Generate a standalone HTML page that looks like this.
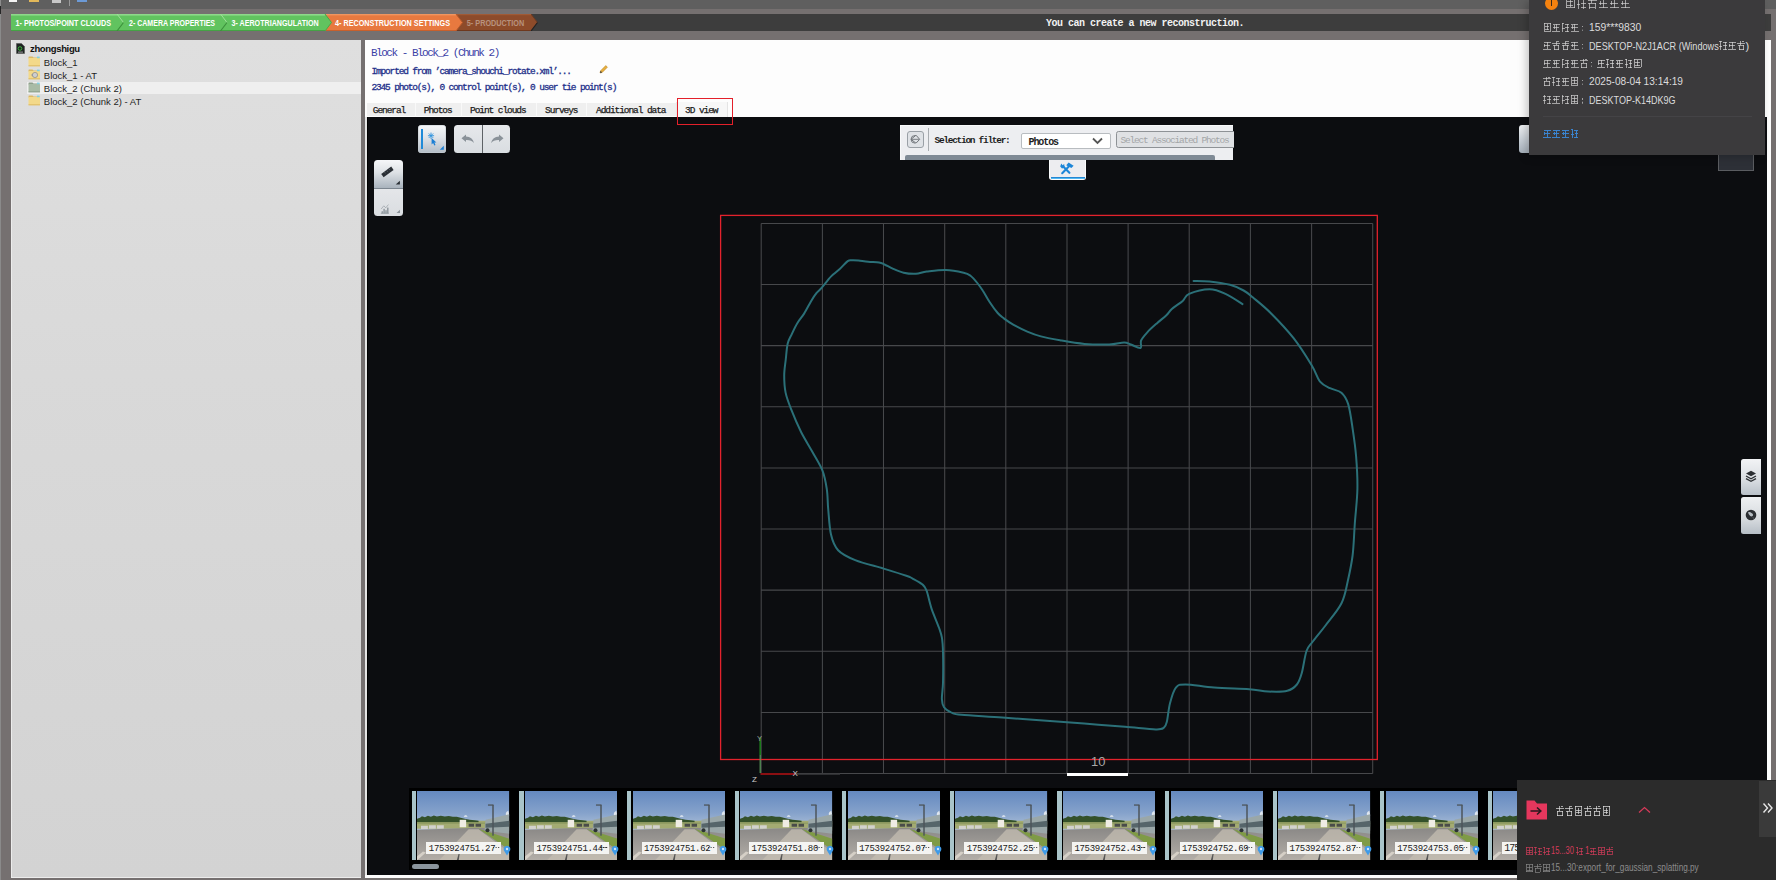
<!DOCTYPE html><html><head><meta charset="utf-8"><title>ContextCapture</title><style>
*{box-sizing:border-box}
html,body{margin:0;padding:0}
body{width:1776px;height:880px;overflow:hidden;position:relative;background:#757070;font-family:"Liberation Sans",sans-serif}
.a{position:absolute}
.mono{font-family:"Liberation Mono",monospace;white-space:pre}
.cj{display:inline-block;color:transparent;overflow:hidden;white-space:nowrap;vertical-align:-1px}
</style></head><body>
<div class="a" style="left:0;top:0;width:1776px;height:9px;background:#5f5f5f"></div>
<div class="a" style="left:0;top:0;width:1px;height:6px;background:#8c8c8c"></div>
<div class="a" style="left:0;top:6px;width:1px;height:8px;background:#262626"></div>
<div class="a" style="left:9px;top:0;width:8px;height:2px;background:#f4f4f4"></div>
<div class="a" style="left:29px;top:0;width:10px;height:1.5px;background:#e2b85a"></div>
<div class="a" style="left:52px;top:0;width:9px;height:2.5px;background:#c8c8c8"></div>
<div class="a" style="left:68.5px;top:0;width:1.5px;height:6px;background:#9a9a9a"></div>
<div class="a" style="left:77px;top:0;width:10px;height:2px;background:#6c9ad6"></div>
<svg class="a" style="left:0;top:14px" width="1776" height="17" viewBox="0 14 1776 17">
<rect x="11" y="14" width="1760" height="17" fill="#3d3d3d"/>
<polygon points="450,14 531,14 537.5,22.5 531,31 450,31" fill="#8d4b2a"/>
<polyline points="531,14 537.5,22.5" stroke="#6a3a22" stroke-width="1" fill="none"/>
<polyline points="537.5,22.5 531,31" stroke="#222" stroke-width="1.2" fill="none"/>
<rect x="450" y="14" width="81" height="1.2" fill="#a05a35"/>
<rect x="450" y="30" width="81" height="1" fill="#6e381e"/>
<polygon points="300,14 456,14 462.5,22.5 456,31 300,31" fill="#e8793f"/>
<rect x="300" y="14" width="156" height="1.4" fill="#f0955f"/>
<rect x="300" y="30" width="156" height="1" fill="#c9602c"/>
<polyline points="456,14 462.5,22.5 456,31" stroke="#b65a2c" stroke-width="1" fill="none"/>
<polygon points="11,14 325,14 331.5,22.5 325,31 11,31" fill="#61c35f"/>
<rect x="11" y="14" width="314" height="1.6" fill="#8ed88a"/>
<rect x="11" y="30" width="314" height="1" fill="#45a245"/>
<polyline points="325,14 331.5,22.5 325,31" stroke="#4aa84a" stroke-width="1" fill="none"/>
<line x1="117" y1="14" x2="123.5" y2="22.5" stroke="#9fe09a" stroke-width="1"/>
<line x1="123.5" y1="22.5" x2="117" y2="31" stroke="#3b8f3b" stroke-width="1.1"/>
<line x1="220.5" y1="14" x2="227.0" y2="22.5" stroke="#9fe09a" stroke-width="1"/>
<line x1="227.0" y1="22.5" x2="220.5" y2="31" stroke="#3b8f3b" stroke-width="1.1"/>
</svg>
<svg class="a" style="left:0;top:14px" width="560" height="17" viewBox="0 14 560 17" font-family="Liberation Sans" font-weight="bold" font-size="8.2">
<text x="15.5" y="25.9" textLength="95.5" lengthAdjust="spacingAndGlyphs" fill="#fff">1- PHOTOS/POINT CLOUDS</text>
<text x="129" y="25.9" textLength="86" lengthAdjust="spacingAndGlyphs" fill="#fff">2- CAMERA PROPERTIES</text>
<text x="231.5" y="25.9" textLength="87.2" lengthAdjust="spacingAndGlyphs" fill="#fff">3- AEROTRIANGULATION</text>
<text x="335" y="25.9" textLength="115" lengthAdjust="spacingAndGlyphs" fill="#fff">4- RECONSTRUCTION SETTINGS</text>
<text x="466.8" y="25.9" textLength="57.4" lengthAdjust="spacingAndGlyphs" fill="#b8927e">5- PRODUCTION</text>
</svg>
<div class="a mono" style="left:1046px;top:18.3px;color:#f2f2f2;font-size:10px;font-weight:bold;letter-spacing:-0.5px;line-height:11px">You can create a new reconstruction.</div>
<div class="a" style="left:0;top:14px;width:1px;height:866px;background:#8a8a8a"></div>
<div class="a" style="left:11px;top:40px;width:350px;height:837.5px;background:linear-gradient(#dfdfdf,#d9d9d9 40%,#d3d3d3);border-left:1px solid #ececec;border-bottom:1px solid #ececec"></div>
<div class="a" style="left:26.5px;top:81.5px;width:334px;height:12.8px;background:#efefef"></div>
<svg class="a" style="left:16px;top:42.5px" width="9" height="11" viewBox="0 0 9 11"><path d="M0.5 0.5 L5.5 0.5 L8.5 3.5 L8.5 10.5 L0.5 10.5 Z" fill="#1e2422" stroke="#555" stroke-width="0.6"/><circle cx="4" cy="5.5" r="1.8" fill="none" stroke="#3ec040" stroke-width="0.9"/><rect x="2" y="8.6" width="5" height="1" fill="#9a9a9a"/></svg>
<div class="a" style="left:30px;top:42.5px;font-size:9.5px;font-weight:bold;color:#101010;line-height:11px;white-space:nowrap;letter-spacing:-0.35px">zhongshigu</div>
<svg class="a" style="left:28.3px;top:55.7px" width="13" height="11" viewBox="0 0 13 11"><path d="M0.5 2.5 L0.5 1.2 Q0.5 0.5 1.2 0.5 L4.5 0.5 L5.5 1.5 L11.5 1.5 L11.5 2.5 Z" fill="#dcb964"/><rect x="0.5" y="2" width="11.5" height="8.3" rx="0.6" fill="#f3d98a"/><rect x="0.5" y="9.3" width="11.5" height="1" fill="#dcb964"/><rect x="9" y="0.6" width="2.6" height="1.6" fill="#7fd0e0"/></svg>
<div class="a" style="left:43.8px;top:56.6px;font-size:9.5px;color:#1e1e1e;line-height:11px;white-space:nowrap">Block_1</div>
<svg class="a" style="left:28.3px;top:68.8px" width="13" height="11" viewBox="0 0 13 11"><path d="M0.5 2.5 L0.5 1.2 Q0.5 0.5 1.2 0.5 L4.5 0.5 L5.5 1.5 L11.5 1.5 L11.5 2.5 Z" fill="#dcb964"/><rect x="0.5" y="2" width="11.5" height="8.3" rx="0.6" fill="#f3d98a"/><rect x="0.5" y="9.3" width="11.5" height="1" fill="#dcb964"/><rect x="9" y="0.6" width="2.6" height="1.6" fill="#7fd0e0"/></svg>
<div class="a" style="left:43.8px;top:69.7px;font-size:9.5px;color:#1e1e1e;line-height:11px;white-space:nowrap">Block_1 - AT</div>
<svg class="a" style="left:28.3px;top:81.9px" width="13" height="11" viewBox="0 0 13 11"><path d="M0.5 2.5 L0.5 1.2 Q0.5 0.5 1.2 0.5 L4.5 0.5 L5.5 1.5 L11.5 1.5 L11.5 2.5 Z" fill="#8fa08c"/><rect x="0.5" y="2" width="11.5" height="8.3" rx="0.6" fill="#a9bba6"/><rect x="0.5" y="9.3" width="11.5" height="1" fill="#8fa08c"/><rect x="9" y="0.6" width="2.6" height="1.6" fill="#7fd0e0"/></svg>
<div class="a" style="left:43.8px;top:82.8px;font-size:9.5px;color:#1e1e1e;line-height:11px;white-space:nowrap">Block_2 (Chunk 2)</div>
<svg class="a" style="left:28.3px;top:95.0px" width="13" height="11" viewBox="0 0 13 11"><path d="M0.5 2.5 L0.5 1.2 Q0.5 0.5 1.2 0.5 L4.5 0.5 L5.5 1.5 L11.5 1.5 L11.5 2.5 Z" fill="#dcb964"/><rect x="0.5" y="2" width="11.5" height="8.3" rx="0.6" fill="#f3d98a"/><rect x="0.5" y="9.3" width="11.5" height="1" fill="#dcb964"/><rect x="9" y="0.6" width="2.6" height="1.6" fill="#7fd0e0"/></svg>
<div class="a" style="left:43.8px;top:95.9px;font-size:9.5px;color:#1e1e1e;line-height:11px;white-space:nowrap">Block_2 (Chunk 2) - AT</div>
<svg class="a" style="left:30px;top:71px" width="10" height="8" viewBox="0 0 10 8"><circle cx="5" cy="4" r="2.6" fill="#cfcfcf" stroke="#8a8a8a" stroke-width="0.7"/><path d="M1 4 L3 2.5 L3 5.5Z" fill="#999"/></svg>
<div class="a" style="left:364.6px;top:40px;width:1406.4px;height:838px;background:#fdfdfd"></div>
<div class="a" style="left:364.6px;top:117px;width:2px;height:758px;background:#e4e4e4"></div>
<div class="a mono" style="left:371px;top:46.5px;font-size:11px;color:#3b3fa6;letter-spacing:-1.49px;line-height:12px">Block - Block_2 (Chunk 2)</div>
<div class="a mono" style="left:371.5px;top:65.5px;font-size:9.5px;color:#23308a;letter-spacing:-1.17px;line-height:11px;-webkit-text-stroke:0.3px #23308a">Imported from ’camera_shouchi_rotate.xml’...</div>
<svg class="a" style="left:598px;top:64px" width="11" height="11" viewBox="0 0 11 11"><path d="M2 9 L2.6 6.8 L7.8 1.6 L9.4 3.2 L4.2 8.4 Z" fill="#e8b040" stroke="#b88420" stroke-width="0.6"/><path d="M2 9 L2.6 6.8 L4.2 8.4Z" fill="#444"/></svg>
<div class="a mono" style="left:371.5px;top:81.5px;font-size:9.5px;color:#23308a;letter-spacing:-1.17px;line-height:11px;-webkit-text-stroke:0.3px #23308a">2345 photo(s), 0 control point(s), 0 user tie point(s)</div>
<div class="a" style="left:367px;top:103px;width:309px;height:13px;background:#efefef"></div>
<div class="a" style="left:415.2px;top:103px;width:1px;height:14px;background:#f9f9f9"></div>
<div class="a" style="left:460.8px;top:103px;width:1px;height:14px;background:#f9f9f9"></div>
<div class="a" style="left:536px;top:103px;width:1px;height:14px;background:#f9f9f9"></div>
<div class="a" style="left:586.4px;top:103px;width:1px;height:14px;background:#f9f9f9"></div>
<div class="a" style="left:676px;top:102px;width:52px;height:15px;background:#f7f7f7;border-left:1px solid #e8e8e8;border-right:1px solid #e4e4e4"></div>
<div class="a mono" style="left:372.8px;top:105.2px;font-size:9.5px;color:#1c1c1c;letter-spacing:-1.07px;line-height:11px;-webkit-text-stroke:0.25px #1c1c1c">General</div>
<div class="a mono" style="left:423.8px;top:105.2px;font-size:9.5px;color:#1c1c1c;letter-spacing:-1.07px;line-height:11px;-webkit-text-stroke:0.25px #1c1c1c">Photos</div>
<div class="a mono" style="left:470px;top:105.2px;font-size:9.5px;color:#1c1c1c;letter-spacing:-1.07px;line-height:11px;-webkit-text-stroke:0.25px #1c1c1c">Point clouds</div>
<div class="a mono" style="left:545px;top:105.2px;font-size:9.5px;color:#1c1c1c;letter-spacing:-1.07px;line-height:11px;-webkit-text-stroke:0.25px #1c1c1c">Surveys</div>
<div class="a mono" style="left:596px;top:105.2px;font-size:9.5px;color:#1c1c1c;letter-spacing:-1.07px;line-height:11px;-webkit-text-stroke:0.25px #1c1c1c">Additional data</div>
<div class="a mono" style="left:685px;top:104.6px;font-size:9.5px;color:#1c1c1c;letter-spacing:-1.07px;line-height:11px;-webkit-text-stroke:0.25px #1c1c1c">3D view</div>
<div class="a" style="left:366.6px;top:117px;width:1400.4px;height:758px;background:#0c0d10"></div>
<div class="a" style="left:366.6px;top:117px;width:1px;height:758px;background:#000"></div>
<svg class="a" style="left:0;top:0" width="1776" height="880" viewBox="0 0 1776 880">
<path d="M761.2 223.4V773.5 M822.4 223.4V773.5 M883.5 223.4V773.5 M944.7 223.4V773.5 M1005.8 223.4V773.5 M1067.0 223.4V773.5 M1128.1 223.4V773.5 M1189.2 223.4V773.5 M1250.4 223.4V773.5 M1311.6 223.4V773.5 M1372.7 223.4V773.5 M761.2 223.4H1372.7 M761.2 284.5H1372.7 M761.2 345.6H1372.7 M761.2 406.8H1372.7 M761.2 467.9H1372.7 M761.2 529.0H1372.7 M761.2 590.1H1372.7 M761.2 651.3H1372.7 M761.2 712.4H1372.7 M761.2 773.5H1372.7" stroke="#47484b" stroke-width="1.05" fill="none"/>
<path d="M1193.6 280.9 C1196.2 281.0 1203.4 280.8 1209.5 281.4 C1215.6 282.0 1224.3 283.3 1230.0 284.8 C1235.7 286.3 1239.8 288.4 1243.6 290.5 C1247.4 292.6 1248.2 293.5 1252.7 297.3 C1257.2 301.1 1264.1 306.4 1270.9 313.2 C1277.7 320.0 1286.8 329.5 1293.6 338.2 C1300.4 346.9 1307.4 358.3 1311.8 365.5 C1316.2 372.7 1316.8 377.6 1319.8 381.4 C1322.8 385.2 1326.4 386.3 1330.0 388.2 C1333.6 390.1 1338.4 390.0 1341.4 392.7 C1344.4 395.4 1346.3 398.0 1348.2 404.1 C1350.1 410.2 1351.4 420.4 1352.7 429.1 C1354.0 437.8 1355.3 446.5 1356.1 456.4 C1356.9 466.3 1357.6 477.5 1357.4 488.7 C1357.2 499.9 1355.6 512.6 1354.8 523.7 C1354.0 534.8 1353.8 546.0 1352.6 555.5 C1351.4 565.0 1349.6 573.0 1347.8 581.0 C1346.0 589.0 1345.2 595.9 1341.5 603.3 C1337.8 610.7 1330.3 619.1 1325.5 625.5 C1320.7 631.9 1316.0 637.2 1312.8 641.5 C1309.6 645.8 1308.3 645.7 1306.5 651.0 C1304.7 656.3 1303.3 667.7 1301.7 673.3 C1300.1 678.9 1299.3 681.6 1296.9 684.5 C1294.5 687.4 1292.1 689.6 1287.3 690.8 C1282.5 692.0 1274.6 691.8 1268.2 691.5 C1261.8 691.2 1258.1 689.9 1249.1 689.2 C1240.1 688.6 1224.7 688.4 1214.1 687.6 C1203.5 686.8 1191.9 684.4 1185.5 684.4 C1179.1 684.4 1178.5 684.5 1175.9 687.6 C1173.3 690.7 1171.5 697.5 1170.0 703.2 C1168.5 708.9 1167.9 717.5 1166.9 721.6 C1165.9 725.7 1165.8 726.4 1163.9 727.7 C1162.0 729.0 1162.2 729.6 1155.7 729.4 C1149.2 729.2 1136.9 727.7 1125.0 726.7 C1113.1 725.7 1097.7 724.6 1084.1 723.6 C1070.5 722.6 1056.8 721.6 1043.2 720.6 C1029.6 719.6 1015.9 718.5 1002.3 717.5 C988.7 716.5 969.9 715.6 961.4 714.8 C952.9 713.9 954.0 713.6 951.1 712.4 C948.2 711.1 945.5 709.5 944.0 707.3 C942.5 705.1 942.1 703.2 941.9 699.1 C941.7 695.0 942.8 690.6 943.0 682.7 C943.2 674.9 943.2 659.5 943.0 652.0 C942.8 644.5 942.6 641.8 941.9 637.7 C941.2 633.6 940.6 632.3 938.9 627.5 C937.2 622.7 933.8 615.2 931.7 609.1 C929.7 603.0 928.1 594.8 926.6 590.7 C925.1 586.6 924.9 586.5 922.5 584.5 C920.1 582.5 915.0 579.9 912.3 578.4 C909.6 576.9 911.1 577.3 906.3 575.7 C901.5 574.1 892.1 571.2 883.6 568.6 C875.1 566.0 862.8 563.2 855.2 560.1 C847.6 557.0 842.1 554.5 838.1 550.2 C834.1 546.0 832.6 541.5 831.0 534.6 C829.4 527.7 828.9 516.6 828.2 509.0 C827.5 501.4 827.8 495.5 826.8 489.1 C825.8 482.7 824.9 476.9 822.5 470.7 C820.1 464.5 816.1 458.6 812.6 452.2 C809.1 445.8 804.8 439.4 801.2 432.3 C797.7 425.2 793.9 416.2 791.3 409.6 C788.7 403.0 786.8 398.3 785.6 392.6 C784.4 386.9 784.2 381.0 784.2 375.6 C784.2 370.2 785.1 365.3 785.7 360.0 C786.3 354.7 786.7 347.9 787.7 343.6 C788.7 339.3 790.2 337.5 791.8 334.1 C793.4 330.7 795.2 326.6 797.3 323.2 C799.3 319.8 801.8 317.2 804.1 313.6 C806.4 310.0 808.9 304.8 810.9 301.4 C812.9 298.0 814.6 295.5 816.4 293.2 C818.2 290.9 820.0 289.8 821.8 287.7 C823.6 285.6 825.7 282.8 827.3 280.9 C828.9 279.0 829.4 278.0 831.4 276.1 C833.4 274.2 836.8 271.8 839.5 269.3 C842.2 266.8 845.7 262.6 847.7 261.1 C849.8 259.6 850.0 260.3 851.8 260.2 C853.6 260.1 855.9 260.2 858.6 260.5 C861.3 260.8 864.8 261.5 868.2 261.8 C871.6 262.1 876.4 262.1 879.1 262.5 C881.8 262.9 882.2 263.5 884.5 264.5 C886.8 265.5 889.5 267.2 892.7 268.6 C895.9 270.0 899.7 271.8 903.6 272.7 C907.5 273.6 912.0 274.0 915.9 273.8 C919.8 273.6 921.8 272.2 926.8 271.6 C931.8 271.0 939.8 269.8 945.9 270.0 C952.0 270.2 959.5 271.8 963.6 272.7 C967.7 273.6 968.2 274.0 970.5 275.7 C972.8 277.4 975.3 280.5 977.3 283.0 C979.3 285.5 980.7 287.3 982.7 290.5 C984.8 293.7 987.1 298.2 989.6 302.0 C992.1 305.8 995.3 310.2 997.7 313.0 C1000.1 315.8 1001.5 316.6 1004.1 318.6 C1006.8 320.6 1009.7 322.6 1013.6 324.8 C1017.5 327.0 1022.8 329.7 1027.3 331.6 C1031.8 333.5 1035.2 334.9 1040.9 336.4 C1046.6 337.9 1054.1 339.2 1061.4 340.5 C1068.7 341.8 1076.5 343.2 1084.5 343.9 C1092.5 344.6 1102.5 344.7 1109.1 344.5 C1115.7 344.3 1120.5 342.5 1124.1 342.5 C1127.7 342.5 1128.2 343.6 1130.9 344.5 C1133.6 345.4 1138.8 348.7 1140.5 348.0 C1142.2 347.3 1140.0 343.1 1141.1 340.5 C1142.2 337.9 1144.7 335.2 1147.3 332.3 C1149.9 329.4 1153.6 326.2 1156.8 323.4 C1160.0 320.5 1163.9 317.6 1166.4 315.2 C1168.9 312.8 1169.1 311.5 1171.8 309.1 C1174.5 306.7 1179.8 303.4 1182.7 300.9 C1185.6 298.4 1184.6 295.8 1189.1 293.9 C1193.6 292.0 1203.4 289.3 1209.5 289.3 C1215.6 289.3 1220.0 291.4 1225.5 293.9 C1231.0 296.4 1239.7 302.4 1242.5 304.1" stroke="#2b7078" stroke-width="2" fill="none" stroke-linejoin="round" stroke-linecap="round"/>
<rect x="720.6" y="215.4" width="656.7" height="544.1" fill="none" stroke="#e3222c" stroke-width="1.3"/>
<line x1="760.2" y1="737" x2="760.2" y2="755" stroke="#1c7a1c" stroke-width="1.6"/>
<line x1="760.2" y1="755" x2="760.2" y2="773" stroke="#5a9a5a" stroke-width="1.2"/>
<line x1="760.5" y1="774" x2="795" y2="774" stroke="#8b0f12" stroke-width="2"/>
<line x1="795" y1="774" x2="840" y2="774" stroke="#3a3b3e" stroke-width="1.4"/>
<rect x="1067" y="773" width="61" height="3" fill="#ffffff"/>
</svg>
<div class="a" style="left:757px;top:733.5px;font-size:7.5px;color:#9a9a9a;line-height:9px">Y</div>
<div class="a" style="left:792.5px;top:769px;font-size:8px;color:#cfcfcf;line-height:9px">X</div>
<div class="a" style="left:752px;top:774.5px;font-size:8px;color:#cfcfcf;line-height:9px">Z</div>
<div class="a" style="left:1091px;top:755px;font-size:13px;color:#a6a6a6;line-height:14px">10</div>
<div class="a" style="left:677px;top:98px;width:56px;height:27px;border:1.4px solid #e3202a"></div>
<div class="a" style="left:418px;top:124.6px;width:28px;height:28.2px;border-radius:3.5px;background:linear-gradient(#f6f7f9,#dfe3e8 45%,#b3bcc6);box-shadow:inset 0 0 0 0.6px #c8ced4"></div>
<div class="a" style="left:421.4px;top:128.5px;width:1.9px;height:20.5px;background:#1f8ad8"></div>
<svg class="a" style="left:426px;top:130px" width="18" height="20" viewBox="0 0 18 20"><g stroke="#2f93de" stroke-width="0.9" stroke-linecap="round"><line x1="5" y1="3" x2="5" y2="8.4"/><line x1="2.3" y1="5.7" x2="7.7" y2="5.7"/><line x1="3.1" y1="3.8" x2="6.9" y2="7.6"/><line x1="6.9" y1="3.8" x2="3.1" y2="7.6"/></g><path d="M5.6 8 L5.6 14.6 L7.1 13.1 L8.3 15.6 L9.5 15.1 L8.4 12.6 L10.4 12.4 Z" fill="#1c7fd4"/><path d="M13.8 19.7 L17.8 15.8 L17.8 19.7 Z" fill="#1c7fd4"/></svg>
<div class="a" style="left:453.7px;top:124.6px;width:56.6px;height:28.2px;border-radius:3.5px;background:linear-gradient(#e6e8eb,#d9dde1)"></div>
<div class="a" style="left:482px;top:124.6px;width:1px;height:28.2px;background:#5e6266"></div>
<svg class="a" style="left:461px;top:134px" width="14" height="10" viewBox="0 0 14 10"><path d="M0.5 4.2 L5 0.5 L5 2.6 Q11.5 2.8 13 9 Q10.5 5.8 5 6 L5 8 Z" fill="#8a9299"/></svg>
<svg class="a" style="left:490px;top:134px" width="14" height="10" viewBox="0 0 14 10"><path d="M13.5 4.2 L9 0.5 L9 2.6 Q2.5 2.8 1 9 Q3.5 5.8 9 6 L9 8 Z" fill="#8a9299"/></svg>
<div class="a" style="left:374px;top:159.5px;width:28.5px;height:28px;border-radius:3.5px 3.5px 0 0;background:linear-gradient(#f6f7f9,#dde1e5 45%,#a9b3bd)"></div>
<div class="a" style="left:374px;top:187.5px;width:28.5px;height:28.5px;border-radius:0 0 3.5px 3.5px;background:linear-gradient(#e4e6e9,#dadde1);border-top:1px solid #7c8690"></div>
<svg class="a" style="left:380px;top:165px" width="22" height="22" viewBox="0 0 22 22"><path d="M1.2 9 L11.2 1.6 L13.6 4.9 L3.6 12.3 Z" fill="#2a2f35"/><g stroke="#8a949c" stroke-width="0.5"><line x1="4.6" y1="7.2" x2="5.4" y2="8.3"/><line x1="6.8" y1="5.6" x2="7.6" y2="6.7"/><line x1="9" y1="4" x2="9.8" y2="5.1"/></g><path d="M15.7 19.5 L19.9 15.8 L19.9 19.5 Z" fill="#2a2f35"/></svg>
<svg class="a" style="left:380px;top:195px" width="22" height="22" viewBox="0 0 22 22"><g fill="#8c949b"><rect x="1.6" y="16.2" width="1.3" height="2.2"/><rect x="3.4" y="13.8" width="1.4" height="4.6"/><rect x="5.3" y="15.2" width="1.4" height="3.2"/><rect x="7.1" y="12.6" width="1.4" height="5.8"/><rect x="0.8" y="17.8" width="8" height="0.8"/></g><path d="M1.2 14 L3.8 10.8 L5.8 12.8 L8.4 9.6" stroke="#8c949b" stroke-width="0.6" fill="none"/><path d="M16.5 18 L20 14.8 L20 18Z" fill="#8c949b"/></svg>
<div class="a" style="left:900.3px;top:124.8px;width:333.2px;height:35px;background:#edeef1;border:1px solid #f8f9fa;border-right:none;border-bottom:none"></div>
<div class="a" style="left:905px;top:155px;width:310.3px;height:4.8px;border-radius:2px 2px 0 0;background:#7f8a95"></div>
<div class="a" style="left:907.2px;top:131px;width:16.6px;height:16.7px;border-radius:3px;background:#dfe2e6;border:1px solid #9aa0a6"></div>
<svg class="a" style="left:909px;top:133px" width="13" height="13" viewBox="0 0 13 13"><path d="M2 6.3 L7 2.2 L10.7 6.3 L7 10.2 Z" fill="none" stroke="#6e7378" stroke-width="1"/><path d="M2 6.3 Q2 2.5 6 2.5 M2 6.3 Q2 10 6 10.2 M2.6 6.3 H10" stroke="#6e7378" stroke-width="0.9" fill="none"/></svg>
<div class="a" style="left:928.4px;top:128px;width:1px;height:23px;background:#a8acb0"></div>
<div class="a mono" style="left:934.5px;top:135px;font-size:9.5px;font-weight:bold;color:#1e1e1e;letter-spacing:-1.29px;line-height:11px">Selection filter:</div>
<div class="a" style="left:1021.4px;top:132.7px;width:89.4px;height:16.4px;border-radius:2px;background:#fff;border:1px solid #b8bcc0"></div>
<div class="a mono" style="left:1028.5px;top:136.6px;font-size:10px;font-weight:bold;color:#1e1e1e;letter-spacing:-1.08px;line-height:11px">Photos</div>
<svg class="a" style="left:1092px;top:137px" width="11" height="8" viewBox="0 0 11 8"><path d="M1 1.5 L5.5 6 L10 1.5" stroke="#555" stroke-width="1.8" fill="none"/></svg>
<div class="a" style="left:1116.2px;top:131.4px;width:125px;height:16.2px;border-radius:2.5px;background:#dfe1e4;border:1px solid #8e9296"></div>
<div class="a mono" style="left:1120.5px;top:134.7px;font-size:9.5px;color:#a4a6a8;letter-spacing:-1.2px;line-height:11px">Select Associated Photos</div>
<div class="a" style="left:1233.5px;top:124px;width:30px;height:36px;background:#0c0d10"></div>
<div class="a" style="left:1049.3px;top:159.5px;width:36.3px;height:20px;border-radius:0 0 3px 3px;background:#ededf0;border:1px solid #fafbfc;border-top:none"></div>
<div class="a" style="left:1050.5px;top:176.8px;width:34px;height:2.2px;background:linear-gradient(#1d74c2,#2b9ae6 50%,#7ad6fa)"></div>
<svg class="a" style="left:1058px;top:161px" width="17" height="15" viewBox="0 0 17 15"><g stroke="#1d86d8" stroke-width="2.1" stroke-linecap="round"><line x1="4.2" y1="12.2" x2="10.8" y2="5.6"/><line x1="11.4" y1="11.8" x2="5.2" y2="5.6"/></g><path d="M8.2 4.2 L10.6 1.4 L15.6 4.8 L13.4 7 Z" fill="#1d86d8"/><path d="M2.2 5.6 L3.2 2.6 L4.6 4.2 L6.2 3 L6.6 6.4 L4 7.4 Z" fill="#1d86d8"/></svg>
<div class="a" style="left:1519px;top:124.8px;width:20px;height:28px;border-radius:3px;background:linear-gradient(#f0f2f4,#c4ccd4 60%,#a8b2bc)"></div>
<div class="a" style="left:1718.3px;top:140px;width:35.3px;height:30.6px;background:#2d3037;border:1px solid #5a5c60;border-top:none"></div>
<div class="a" style="left:1741px;top:458.5px;width:20px;height:36px;border-radius:2.5px 0 0 2.5px;background:linear-gradient(#f2f3f5,#d8dce1 60%,#b9c1c9)"></div>
<div class="a" style="left:1741px;top:496.5px;width:20px;height:37.5px;border-radius:2.5px 0 0 2.5px;background:linear-gradient(#eef0f2,#d6dade 60%,#b6bec6)"></div>
<svg class="a" style="left:1745px;top:470px" width="12" height="13" viewBox="0 0 12 13"><path d="M6 0.8 L11 3.5 L6 6.2 L1 3.5Z" fill="#2c2f33"/><path d="M1 6 L6 8.7 L11 6" stroke="#2c2f33" stroke-width="1.3" fill="none"/><path d="M1 8.6 L6 11.3 L11 8.6" stroke="#2c2f33" stroke-width="1.3" fill="none"/></svg>
<svg class="a" style="left:1745px;top:508.5px" width="12" height="12" viewBox="0 0 12 12"><circle cx="6" cy="6" r="5.3" fill="#2c2f33"/><path d="M3 3.2 Q5 2.5 6.5 4 Q8.5 4.5 8 6.5 Q6.8 8 5.2 7 Q3.5 5.8 3 3.2Z M7.5 8 Q8.8 8.4 8.6 10" fill="#b8bec4"/></svg>
<svg width="0" height="0" style="position:absolute"><defs><linearGradient id="sky" x1="0" y1="0" x2="0" y2="1"><stop offset="0" stop-color="#6489c0"/><stop offset="0.55" stop-color="#85a2cb"/><stop offset="1" stop-color="#b2c4da"/></linearGradient><linearGradient id="road" x1="0" y1="0" x2="0" y2="1"><stop offset="0" stop-color="#8a8886"/><stop offset="1" stop-color="#b3aea8"/></linearGradient><symbol id="ph" viewBox="0 0 93 70"><rect width="93" height="40" fill="url(#sky)"/><path d="M92 20 Q88 22 90 25 L93 25Z" fill="#dfe6ee"/><path d="M47 26 Q49 23 51 26Z" fill="#e8eef4"/><rect x="0" y="30" width="93" height="8" fill="#a3ab72"/><path d="M0 31 L0 28 L3 27 L5 25.5 L8 26.5 L11 25 L14 26 L17 24.8 L20 25.8 L24 25 L28 25.8 L32 25.2 L36 26 L40 26 L44 27 L48 28 L53 29 L58 29.5 L62 30 L62 31.5 L0 31.5Z" fill="#34512a"/><path d="M0 31.5 L93 32 L93 33 L0 33Z" fill="#8d9a60"/><rect x="43" y="29" width="6.5" height="7.5" fill="#efece4"/><g fill="#d2d2ce"><rect x="4" y="35" width="7" height="3.5"/><rect x="12" y="34.5" width="7" height="3.5"/><rect x="20" y="34.5" width="7" height="3.5"/></g><g fill="#4a4c4a"><rect x="52" y="33" width="5.5" height="3"/><rect x="59" y="33" width="5.5" height="3"/></g><path d="M0 39 L60 37 L93 38 L93 70 L0 70Z" fill="url(#road)"/><path d="M22 70 L52 38.5 L62 38.5 L93 62 L93 70Z" fill="#c4bdb2" opacity="0.75"/><path d="M62 38 L93 48 L93 57 L88 56 Z" fill="#7f9b46"/><path d="M69 29 L93 23.5 L93 43 L68 40 Z" fill="#9aa7a8"/><path d="M69 33 L93 30 L93 36 L69 37Z" fill="#56656a"/><circle cx="71" cy="39.5" r="2" fill="#2c3234"/><rect x="75.8" y="14" width="1.5" height="31" fill="#4d555b"/><rect x="71.5" y="13.5" width="5.5" height="1.3" fill="#4d555b"/><path d="M0 66 L6 61 L9 62 L0 70Z" fill="#e0dad0" opacity="0.8"/><path d="M40 70 L42 63 L43 63 L42 70Z" fill="#555"/></symbol></defs></svg>
<div class="a" style="left:409px;top:788px;width:1108px;height:82px;background:#000"></div>
<div class="a" style="left:411.6px;top:863.8px;width:27.7px;height:5.2px;border-radius:2.6px;background:#8a949c"></div>
<div class="a" style="left:411.8px;top:790.6px;width:4.3px;height:69.5px;background:#a9c4c9"></div>
<svg class="a" style="left:417.3px;top:790.6px" width="92.5" height="69.5" viewBox="0 0 93.2 70" preserveAspectRatio="xMinYMin slice"><use href="#ph" width="93" height="70"/></svg>
<div class="a" style="left:426.3px;top:842px;width:75px;height:12px;background:#f4f4f2"></div>
<div class="a mono" style="left:428.8px;top:842.5px;font-size:9px;color:#1a1a1a;letter-spacing:-0.29px;line-height:11px;padding-top:1.5px">1753924751.27</div>
<div class="a" style="left:492.8px;top:847px;width:1.3px;height:1.3px;background:#333;box-shadow:2.6px 0 0 #333,5.2px 0 0 #333"></div>
<svg class="a" style="left:503.3px;top:845px" width="8" height="11" viewBox="0 0 8 11"><path d="M4 10.5 L1 5.5 A3.3 3.3 0 1 1 7 5.5 Z" fill="#3f9be8"/><circle cx="4" cy="4" r="1.2" fill="#cfe6fa"/></svg>
<div class="a" style="left:519.4px;top:790.6px;width:4.3px;height:69.5px;background:#a9c4c9"></div>
<svg class="a" style="left:524.9px;top:790.6px" width="92.5" height="69.5" viewBox="0 0 93.2 70" preserveAspectRatio="xMinYMin slice"><use href="#ph" width="93" height="70"/></svg>
<div class="a" style="left:533.9px;top:842px;width:75px;height:12px;background:#f4f4f2"></div>
<div class="a mono" style="left:536.4px;top:842.5px;font-size:9px;color:#1a1a1a;letter-spacing:-0.29px;line-height:11px;padding-top:1.5px">1753924751.44</div>
<div class="a" style="left:600.4px;top:847px;width:1.3px;height:1.3px;background:#333;box-shadow:2.6px 0 0 #333,5.2px 0 0 #333"></div>
<svg class="a" style="left:610.9px;top:845px" width="8" height="11" viewBox="0 0 8 11"><path d="M4 10.5 L1 5.5 A3.3 3.3 0 1 1 7 5.5 Z" fill="#3f9be8"/><circle cx="4" cy="4" r="1.2" fill="#cfe6fa"/></svg>
<div class="a" style="left:627.0px;top:790.6px;width:4.3px;height:69.5px;background:#a9c4c9"></div>
<svg class="a" style="left:632.5px;top:790.6px" width="92.5" height="69.5" viewBox="0 0 93.2 70" preserveAspectRatio="xMinYMin slice"><use href="#ph" width="93" height="70"/></svg>
<div class="a" style="left:641.5px;top:842px;width:75px;height:12px;background:#f4f4f2"></div>
<div class="a mono" style="left:644.0px;top:842.5px;font-size:9px;color:#1a1a1a;letter-spacing:-0.29px;line-height:11px;padding-top:1.5px">1753924751.62</div>
<div class="a" style="left:708.0px;top:847px;width:1.3px;height:1.3px;background:#333;box-shadow:2.6px 0 0 #333,5.2px 0 0 #333"></div>
<svg class="a" style="left:718.5px;top:845px" width="8" height="11" viewBox="0 0 8 11"><path d="M4 10.5 L1 5.5 A3.3 3.3 0 1 1 7 5.5 Z" fill="#3f9be8"/><circle cx="4" cy="4" r="1.2" fill="#cfe6fa"/></svg>
<div class="a" style="left:734.6px;top:790.6px;width:4.3px;height:69.5px;background:#a9c4c9"></div>
<svg class="a" style="left:740.1px;top:790.6px" width="92.5" height="69.5" viewBox="0 0 93.2 70" preserveAspectRatio="xMinYMin slice"><use href="#ph" width="93" height="70"/></svg>
<div class="a" style="left:749.1px;top:842px;width:75px;height:12px;background:#f4f4f2"></div>
<div class="a mono" style="left:751.6px;top:842.5px;font-size:9px;color:#1a1a1a;letter-spacing:-0.29px;line-height:11px;padding-top:1.5px">1753924751.80</div>
<div class="a" style="left:815.6px;top:847px;width:1.3px;height:1.3px;background:#333;box-shadow:2.6px 0 0 #333,5.2px 0 0 #333"></div>
<svg class="a" style="left:826.1px;top:845px" width="8" height="11" viewBox="0 0 8 11"><path d="M4 10.5 L1 5.5 A3.3 3.3 0 1 1 7 5.5 Z" fill="#3f9be8"/><circle cx="4" cy="4" r="1.2" fill="#cfe6fa"/></svg>
<div class="a" style="left:842.2px;top:790.6px;width:4.3px;height:69.5px;background:#a9c4c9"></div>
<svg class="a" style="left:847.7px;top:790.6px" width="92.5" height="69.5" viewBox="0 0 93.2 70" preserveAspectRatio="xMinYMin slice"><use href="#ph" width="93" height="70"/></svg>
<div class="a" style="left:856.7px;top:842px;width:75px;height:12px;background:#f4f4f2"></div>
<div class="a mono" style="left:859.2px;top:842.5px;font-size:9px;color:#1a1a1a;letter-spacing:-0.29px;line-height:11px;padding-top:1.5px">1753924752.07</div>
<div class="a" style="left:923.2px;top:847px;width:1.3px;height:1.3px;background:#333;box-shadow:2.6px 0 0 #333,5.2px 0 0 #333"></div>
<svg class="a" style="left:933.7px;top:845px" width="8" height="11" viewBox="0 0 8 11"><path d="M4 10.5 L1 5.5 A3.3 3.3 0 1 1 7 5.5 Z" fill="#3f9be8"/><circle cx="4" cy="4" r="1.2" fill="#cfe6fa"/></svg>
<div class="a" style="left:949.8px;top:790.6px;width:4.3px;height:69.5px;background:#a9c4c9"></div>
<svg class="a" style="left:955.3px;top:790.6px" width="92.5" height="69.5" viewBox="0 0 93.2 70" preserveAspectRatio="xMinYMin slice"><use href="#ph" width="93" height="70"/></svg>
<div class="a" style="left:964.3px;top:842px;width:75px;height:12px;background:#f4f4f2"></div>
<div class="a mono" style="left:966.8px;top:842.5px;font-size:9px;color:#1a1a1a;letter-spacing:-0.29px;line-height:11px;padding-top:1.5px">1753924752.25</div>
<div class="a" style="left:1030.8px;top:847px;width:1.3px;height:1.3px;background:#333;box-shadow:2.6px 0 0 #333,5.2px 0 0 #333"></div>
<svg class="a" style="left:1041.3px;top:845px" width="8" height="11" viewBox="0 0 8 11"><path d="M4 10.5 L1 5.5 A3.3 3.3 0 1 1 7 5.5 Z" fill="#3f9be8"/><circle cx="4" cy="4" r="1.2" fill="#cfe6fa"/></svg>
<div class="a" style="left:1057.4px;top:790.6px;width:4.3px;height:69.5px;background:#a9c4c9"></div>
<svg class="a" style="left:1062.9px;top:790.6px" width="92.5" height="69.5" viewBox="0 0 93.2 70" preserveAspectRatio="xMinYMin slice"><use href="#ph" width="93" height="70"/></svg>
<div class="a" style="left:1071.9px;top:842px;width:75px;height:12px;background:#f4f4f2"></div>
<div class="a mono" style="left:1074.4px;top:842.5px;font-size:9px;color:#1a1a1a;letter-spacing:-0.29px;line-height:11px;padding-top:1.5px">1753924752.43</div>
<div class="a" style="left:1138.4px;top:847px;width:1.3px;height:1.3px;background:#333;box-shadow:2.6px 0 0 #333,5.2px 0 0 #333"></div>
<svg class="a" style="left:1148.9px;top:845px" width="8" height="11" viewBox="0 0 8 11"><path d="M4 10.5 L1 5.5 A3.3 3.3 0 1 1 7 5.5 Z" fill="#3f9be8"/><circle cx="4" cy="4" r="1.2" fill="#cfe6fa"/></svg>
<div class="a" style="left:1165.0px;top:790.6px;width:4.3px;height:69.5px;background:#a9c4c9"></div>
<svg class="a" style="left:1170.5px;top:790.6px" width="92.5" height="69.5" viewBox="0 0 93.2 70" preserveAspectRatio="xMinYMin slice"><use href="#ph" width="93" height="70"/></svg>
<div class="a" style="left:1179.5px;top:842px;width:75px;height:12px;background:#f4f4f2"></div>
<div class="a mono" style="left:1182.0px;top:842.5px;font-size:9px;color:#1a1a1a;letter-spacing:-0.29px;line-height:11px;padding-top:1.5px">1753924752.69</div>
<div class="a" style="left:1246.0px;top:847px;width:1.3px;height:1.3px;background:#333;box-shadow:2.6px 0 0 #333,5.2px 0 0 #333"></div>
<svg class="a" style="left:1256.5px;top:845px" width="8" height="11" viewBox="0 0 8 11"><path d="M4 10.5 L1 5.5 A3.3 3.3 0 1 1 7 5.5 Z" fill="#3f9be8"/><circle cx="4" cy="4" r="1.2" fill="#cfe6fa"/></svg>
<div class="a" style="left:1272.6px;top:790.6px;width:4.3px;height:69.5px;background:#a9c4c9"></div>
<svg class="a" style="left:1278.1px;top:790.6px" width="92.5" height="69.5" viewBox="0 0 93.2 70" preserveAspectRatio="xMinYMin slice"><use href="#ph" width="93" height="70"/></svg>
<div class="a" style="left:1287.1px;top:842px;width:75px;height:12px;background:#f4f4f2"></div>
<div class="a mono" style="left:1289.6px;top:842.5px;font-size:9px;color:#1a1a1a;letter-spacing:-0.29px;line-height:11px;padding-top:1.5px">1753924752.87</div>
<div class="a" style="left:1353.6px;top:847px;width:1.3px;height:1.3px;background:#333;box-shadow:2.6px 0 0 #333,5.2px 0 0 #333"></div>
<svg class="a" style="left:1364.1px;top:845px" width="8" height="11" viewBox="0 0 8 11"><path d="M4 10.5 L1 5.5 A3.3 3.3 0 1 1 7 5.5 Z" fill="#3f9be8"/><circle cx="4" cy="4" r="1.2" fill="#cfe6fa"/></svg>
<div class="a" style="left:1380.2px;top:790.6px;width:4.3px;height:69.5px;background:#a9c4c9"></div>
<svg class="a" style="left:1385.7px;top:790.6px" width="92.5" height="69.5" viewBox="0 0 93.2 70" preserveAspectRatio="xMinYMin slice"><use href="#ph" width="93" height="70"/></svg>
<div class="a" style="left:1394.7px;top:842px;width:75px;height:12px;background:#f4f4f2"></div>
<div class="a mono" style="left:1397.2px;top:842.5px;font-size:9px;color:#1a1a1a;letter-spacing:-0.29px;line-height:11px;padding-top:1.5px">1753924753.05</div>
<div class="a" style="left:1461.2px;top:847px;width:1.3px;height:1.3px;background:#333;box-shadow:2.6px 0 0 #333,5.2px 0 0 #333"></div>
<svg class="a" style="left:1471.7px;top:845px" width="8" height="11" viewBox="0 0 8 11"><path d="M4 10.5 L1 5.5 A3.3 3.3 0 1 1 7 5.5 Z" fill="#3f9be8"/><circle cx="4" cy="4" r="1.2" fill="#cfe6fa"/></svg>
<div class="a" style="left:1487.8px;top:790.6px;width:4.3px;height:69.5px;background:#a9c4c9"></div>
<svg class="a" style="left:1493.3px;top:790.6px" width="23.7" height="69.5" viewBox="0 0 23.9 70" preserveAspectRatio="xMinYMin slice"><use href="#ph" width="93" height="70"/></svg>
<div class="a" style="left:1502.3px;top:842px;width:30px;height:12px;background:#f4f4f2"></div>
<div class="a mono" style="left:1504.3px;top:842.5px;font-size:10px;color:#1a1a1a;letter-spacing:-1px;line-height:11px">175</div>
<div class="a" style="left:1528.7px;top:0;width:236.4px;height:155.2px;background:#3b3a3c;box-shadow:-3px 2px 8px rgba(0,0,0,.22)"></div>
<div class="a" style="left:1544.7px;top:-3px;width:13.4px;height:13.4px;border-radius:50%;background:#f5820f"></div>
<div class="a" style="left:1550.8px;top:-1px;width:1.3px;height:7px;background:#3b2a18"></div>
<div class="a" style="left:1517px;top:780.3px;width:259px;height:100px;background:#2b2b2b"></div>
<div class="a" style="left:1759px;top:781px;width:17px;height:56px;background:#3a3a3a"></div>
<svg class="a" style="left:1762px;top:802px" width="12" height="12" viewBox="0 0 12 12"><path d="M1.5 1.5 L5.5 6 L1.5 10.5 M6 1.5 L10 6 L6 10.5" stroke="#e6e6e6" stroke-width="1.4" fill="none"/></svg>
<svg class="a" style="left:1526px;top:799.5px" width="22" height="20" viewBox="0 0 22 20"><path d="M0.5 0.5 L8.5 0.5 L11 3.5 L21 3.5 L21 19.5 L0.5 19.5 Z" fill="#e5375d"/><path d="M4.5 11 H14.5 M11 7.5 L14.8 11 L11 14.5" stroke="#2a1a1e" stroke-width="1.6" fill="none"/></svg>
<svg class="a" style="left:1638px;top:806px" width="13" height="8" viewBox="0 0 13 8"><path d="M1 6.5 L6.5 1.5 L12 6.5" stroke="#d83a5a" stroke-width="1.2" fill="none"/></svg>
<div class="a" style="left:1565px;top:-2px;color:transparent;font-size:9px;white-space:nowrap;line-height:10px">远程控制通知</div>
<div class="a" style="left:1566.0px;top:-2.5px;width:8.5px;height:1.1px;background:#d6d6d6;opacity:0.68"></div>
<div class="a" style="left:1566.0px;top:-2.5px;width:1.0px;height:10.4px;background:#d6d6d6;opacity:0.68"></div>
<div class="a" style="left:1573.5px;top:-2.5px;width:1.0px;height:10.4px;background:#d6d6d6;opacity:0.68"></div>
<div class="a" style="left:1567.4px;top:1.3px;width:5.7px;height:1.1px;background:#d6d6d6;opacity:0.68"></div>
<div class="a" style="left:1567.4px;top:4.7px;width:5.7px;height:1.1px;background:#d6d6d6;opacity:0.68"></div>
<div class="a" style="left:1566.0px;top:7.2px;width:8.5px;height:1.1px;background:#d6d6d6;opacity:0.68"></div>
<div class="a" style="left:1569.8px;top:-0.9px;width:1.0px;height:7.7px;background:#d6d6d6;opacity:0.68"></div>
<div class="a" style="left:1576.5px;top:-1.9px;width:3.3px;height:1.1px;background:#d6d6d6;opacity:0.68"></div>
<div class="a" style="left:1577.6px;top:-2.5px;width:1.0px;height:11.0px;background:#d6d6d6;opacity:0.68"></div>
<div class="a" style="left:1576.5px;top:3.6px;width:3.6px;height:1.1px;background:#d6d6d6;opacity:0.68"></div>
<div class="a" style="left:1580.8px;top:-1.4px;width:5.2px;height:1.1px;background:#d6d6d6;opacity:0.68"></div>
<div class="a" style="left:1581.2px;top:2.5px;width:4.7px;height:1.1px;background:#d6d6d6;opacity:0.68"></div>
<div class="a" style="left:1583.1px;top:-1.4px;width:1.0px;height:9.9px;background:#d6d6d6;opacity:0.68"></div>
<div class="a" style="left:1580.8px;top:7.2px;width:5.2px;height:1.1px;background:#d6d6d6;opacity:0.68"></div>
<div class="a" style="left:1587.5px;top:-0.3px;width:9.5px;height:1.1px;background:#d6d6d6;opacity:0.68"></div>
<div class="a" style="left:1591.3px;top:-2.5px;width:1.0px;height:5.5px;background:#d6d6d6;opacity:0.68"></div>
<div class="a" style="left:1588.4px;top:3.0px;width:7.6px;height:1.1px;background:#d6d6d6;opacity:0.68"></div>
<div class="a" style="left:1588.9px;top:3.0px;width:1.0px;height:5.5px;background:#d6d6d6;opacity:0.68"></div>
<div class="a" style="left:1594.6px;top:3.0px;width:1.0px;height:5.5px;background:#d6d6d6;opacity:0.68"></div>
<div class="a" style="left:1588.9px;top:7.4px;width:6.6px;height:1.1px;background:#d6d6d6;opacity:0.68"></div>
<div class="a" style="left:1593.2px;top:-2.5px;width:2.8px;height:1.1px;background:#d6d6d6;opacity:0.68"></div>
<div class="a" style="left:1599.0px;top:-1.2px;width:8.5px;height:1.1px;background:#d6d6d6;opacity:0.68"></div>
<div class="a" style="left:1599.4px;top:2.8px;width:7.6px;height:1.1px;background:#d6d6d6;opacity:0.68"></div>
<div class="a" style="left:1598.5px;top:7.2px;width:9.5px;height:1.2px;background:#d6d6d6;opacity:0.68"></div>
<div class="a" style="left:1602.8px;top:-1.2px;width:1.0px;height:8.8px;background:#d6d6d6;opacity:0.68"></div>
<div class="a" style="left:1599.9px;top:0.8px;width:1.0px;height:4.4px;background:#d6d6d6;opacity:0.68"></div>
<div class="a" style="left:1610.0px;top:-1.2px;width:8.5px;height:1.1px;background:#d6d6d6;opacity:0.68"></div>
<div class="a" style="left:1610.4px;top:2.8px;width:7.6px;height:1.1px;background:#d6d6d6;opacity:0.68"></div>
<div class="a" style="left:1609.5px;top:7.2px;width:9.5px;height:1.2px;background:#d6d6d6;opacity:0.68"></div>
<div class="a" style="left:1613.8px;top:-1.2px;width:1.0px;height:8.8px;background:#d6d6d6;opacity:0.68"></div>
<div class="a" style="left:1610.9px;top:0.8px;width:1.0px;height:4.4px;background:#d6d6d6;opacity:0.68"></div>
<div class="a" style="left:1621.0px;top:-1.2px;width:8.5px;height:1.1px;background:#d6d6d6;opacity:0.68"></div>
<div class="a" style="left:1621.4px;top:2.8px;width:7.6px;height:1.1px;background:#d6d6d6;opacity:0.68"></div>
<div class="a" style="left:1620.5px;top:7.2px;width:9.5px;height:1.2px;background:#d6d6d6;opacity:0.68"></div>
<div class="a" style="left:1624.8px;top:-1.2px;width:1.0px;height:8.8px;background:#d6d6d6;opacity:0.68"></div>
<div class="a" style="left:1621.9px;top:0.8px;width:1.0px;height:4.4px;background:#d6d6d6;opacity:0.68"></div>
<div class="a" style="left:1543px;top:22.8px;color:transparent;font-size:9px;white-space:nowrap;line-height:10px">主控账号：</div>
<div class="a" style="left:1543.6px;top:22.6px;width:7.1px;height:0.9px;background:#d4d4d4;opacity:0.68"></div>
<div class="a" style="left:1543.6px;top:22.6px;width:1.0px;height:8.7px;background:#d4d4d4;opacity:0.68"></div>
<div class="a" style="left:1549.9px;top:22.6px;width:1.0px;height:8.7px;background:#d4d4d4;opacity:0.68"></div>
<div class="a" style="left:1544.8px;top:25.8px;width:4.7px;height:0.9px;background:#d4d4d4;opacity:0.68"></div>
<div class="a" style="left:1544.8px;top:28.6px;width:4.7px;height:0.9px;background:#d4d4d4;opacity:0.68"></div>
<div class="a" style="left:1543.6px;top:30.7px;width:7.1px;height:0.9px;background:#d4d4d4;opacity:0.68"></div>
<div class="a" style="left:1546.7px;top:24.0px;width:1.0px;height:6.4px;background:#d4d4d4;opacity:0.68"></div>
<div class="a" style="left:1552.7px;top:23.7px;width:7.1px;height:0.9px;background:#d4d4d4;opacity:0.68"></div>
<div class="a" style="left:1553.1px;top:27.0px;width:6.3px;height:0.9px;background:#d4d4d4;opacity:0.68"></div>
<div class="a" style="left:1552.4px;top:30.7px;width:7.9px;height:1.0px;background:#d4d4d4;opacity:0.68"></div>
<div class="a" style="left:1555.9px;top:23.7px;width:1.0px;height:7.4px;background:#d4d4d4;opacity:0.68"></div>
<div class="a" style="left:1553.5px;top:25.4px;width:1.0px;height:3.7px;background:#d4d4d4;opacity:0.68"></div>
<div class="a" style="left:1561.5px;top:23.1px;width:2.8px;height:0.9px;background:#d4d4d4;opacity:0.68"></div>
<div class="a" style="left:1562.4px;top:22.6px;width:1.0px;height:9.2px;background:#d4d4d4;opacity:0.68"></div>
<div class="a" style="left:1561.5px;top:27.7px;width:3.0px;height:0.9px;background:#d4d4d4;opacity:0.68"></div>
<div class="a" style="left:1565.0px;top:23.5px;width:4.3px;height:0.9px;background:#d4d4d4;opacity:0.68"></div>
<div class="a" style="left:1565.4px;top:26.7px;width:3.9px;height:0.9px;background:#d4d4d4;opacity:0.68"></div>
<div class="a" style="left:1567.0px;top:23.5px;width:1.0px;height:8.3px;background:#d4d4d4;opacity:0.68"></div>
<div class="a" style="left:1565.0px;top:30.7px;width:4.3px;height:0.9px;background:#d4d4d4;opacity:0.68"></div>
<div class="a" style="left:1571.0px;top:23.7px;width:7.1px;height:0.9px;background:#d4d4d4;opacity:0.68"></div>
<div class="a" style="left:1571.4px;top:27.0px;width:6.3px;height:0.9px;background:#d4d4d4;opacity:0.68"></div>
<div class="a" style="left:1570.7px;top:30.7px;width:7.9px;height:1.0px;background:#d4d4d4;opacity:0.68"></div>
<div class="a" style="left:1574.2px;top:23.7px;width:1.0px;height:7.4px;background:#d4d4d4;opacity:0.68"></div>
<div class="a" style="left:1571.8px;top:25.4px;width:1.0px;height:3.7px;background:#d4d4d4;opacity:0.68"></div>
<div class="a" style="left:1581.8px;top:25.8px;width:1.4px;height:1.4px;background:#d4d4d4;box-shadow:0 3.7px 0 #d4d4d4;opacity:0.68"></div>
<div class="a" style="left:1588.6px;top:21.3px;font-size:11px;color:#dcdcdc;font-weight:normal;white-space:nowrap;line-height:13px;transform:scaleX(0.94);transform-origin:0 0">159***9830</div>
<div class="a" style="left:1543px;top:41px;color:transparent;font-size:9px;white-space:nowrap;line-height:10px">主控设备：</div>
<div class="a" style="left:1543.6px;top:41.9px;width:7.1px;height:0.9px;background:#d4d4d4;opacity:0.68"></div>
<div class="a" style="left:1544.0px;top:45.2px;width:6.3px;height:0.9px;background:#d4d4d4;opacity:0.68"></div>
<div class="a" style="left:1543.2px;top:48.9px;width:7.9px;height:1.0px;background:#d4d4d4;opacity:0.68"></div>
<div class="a" style="left:1546.7px;top:41.9px;width:1.0px;height:7.4px;background:#d4d4d4;opacity:0.68"></div>
<div class="a" style="left:1544.4px;top:43.6px;width:1.0px;height:3.7px;background:#d4d4d4;opacity:0.68"></div>
<div class="a" style="left:1552.4px;top:42.6px;width:7.9px;height:0.9px;background:#d4d4d4;opacity:0.68"></div>
<div class="a" style="left:1555.5px;top:40.8px;width:1.0px;height:4.6px;background:#d4d4d4;opacity:0.68"></div>
<div class="a" style="left:1553.1px;top:45.4px;width:6.3px;height:0.9px;background:#d4d4d4;opacity:0.68"></div>
<div class="a" style="left:1553.5px;top:45.4px;width:1.0px;height:4.6px;background:#d4d4d4;opacity:0.68"></div>
<div class="a" style="left:1558.3px;top:45.4px;width:1.0px;height:4.6px;background:#d4d4d4;opacity:0.68"></div>
<div class="a" style="left:1553.5px;top:49.1px;width:5.5px;height:0.9px;background:#d4d4d4;opacity:0.68"></div>
<div class="a" style="left:1557.1px;top:40.8px;width:2.4px;height:0.9px;background:#d4d4d4;opacity:0.68"></div>
<div class="a" style="left:1561.5px;top:42.6px;width:7.9px;height:0.9px;background:#d4d4d4;opacity:0.68"></div>
<div class="a" style="left:1564.6px;top:40.8px;width:1.0px;height:4.6px;background:#d4d4d4;opacity:0.68"></div>
<div class="a" style="left:1562.3px;top:45.4px;width:6.3px;height:0.9px;background:#d4d4d4;opacity:0.68"></div>
<div class="a" style="left:1562.7px;top:45.4px;width:1.0px;height:4.6px;background:#d4d4d4;opacity:0.68"></div>
<div class="a" style="left:1567.4px;top:45.4px;width:1.0px;height:4.6px;background:#d4d4d4;opacity:0.68"></div>
<div class="a" style="left:1562.7px;top:49.1px;width:5.5px;height:0.9px;background:#d4d4d4;opacity:0.68"></div>
<div class="a" style="left:1566.2px;top:40.8px;width:2.4px;height:0.9px;background:#d4d4d4;opacity:0.68"></div>
<div class="a" style="left:1571.0px;top:41.9px;width:7.1px;height:0.9px;background:#d4d4d4;opacity:0.68"></div>
<div class="a" style="left:1571.4px;top:45.2px;width:6.3px;height:0.9px;background:#d4d4d4;opacity:0.68"></div>
<div class="a" style="left:1570.7px;top:48.9px;width:7.9px;height:1.0px;background:#d4d4d4;opacity:0.68"></div>
<div class="a" style="left:1574.2px;top:41.9px;width:1.0px;height:7.4px;background:#d4d4d4;opacity:0.68"></div>
<div class="a" style="left:1571.8px;top:43.6px;width:1.0px;height:3.7px;background:#d4d4d4;opacity:0.68"></div>
<div class="a" style="left:1581.8px;top:44.0px;width:1.4px;height:1.4px;background:#d4d4d4;box-shadow:0 3.7px 0 #d4d4d4;opacity:0.68"></div>
<div class="a" style="left:1588.6px;top:39.5px;font-size:11px;color:#dcdcdc;font-weight:normal;white-space:nowrap;line-height:13px;transform:scaleX(0.83);transform-origin:0 0">DESKTOP-N2J1ACR (Windows</div>
<div class="a" style="left:1717.5px;top:41px;color:transparent;font-size:9px;white-space:nowrap;line-height:10px">个人版)</div>
<div class="a" style="left:1719.0px;top:41.3px;width:2.8px;height:0.9px;background:#dcdcdc;opacity:0.68"></div>
<div class="a" style="left:1719.9px;top:40.8px;width:1.0px;height:9.2px;background:#dcdcdc;opacity:0.68"></div>
<div class="a" style="left:1719.0px;top:45.9px;width:3.0px;height:0.9px;background:#dcdcdc;opacity:0.68"></div>
<div class="a" style="left:1722.5px;top:41.7px;width:4.3px;height:0.9px;background:#dcdcdc;opacity:0.68"></div>
<div class="a" style="left:1722.9px;top:44.9px;width:3.9px;height:0.9px;background:#dcdcdc;opacity:0.68"></div>
<div class="a" style="left:1724.5px;top:41.7px;width:1.0px;height:8.3px;background:#dcdcdc;opacity:0.68"></div>
<div class="a" style="left:1722.5px;top:48.9px;width:4.3px;height:0.9px;background:#dcdcdc;opacity:0.68"></div>
<div class="a" style="left:1728.5px;top:41.9px;width:7.1px;height:0.9px;background:#dcdcdc;opacity:0.68"></div>
<div class="a" style="left:1728.9px;top:45.2px;width:6.3px;height:0.9px;background:#dcdcdc;opacity:0.68"></div>
<div class="a" style="left:1728.2px;top:48.9px;width:7.9px;height:1.0px;background:#dcdcdc;opacity:0.68"></div>
<div class="a" style="left:1731.7px;top:41.9px;width:1.0px;height:7.4px;background:#dcdcdc;opacity:0.68"></div>
<div class="a" style="left:1729.3px;top:43.6px;width:1.0px;height:3.7px;background:#dcdcdc;opacity:0.68"></div>
<div class="a" style="left:1737.3px;top:42.6px;width:7.9px;height:0.9px;background:#dcdcdc;opacity:0.68"></div>
<div class="a" style="left:1740.4px;top:40.8px;width:1.0px;height:4.6px;background:#dcdcdc;opacity:0.68"></div>
<div class="a" style="left:1738.1px;top:45.4px;width:6.3px;height:0.9px;background:#dcdcdc;opacity:0.68"></div>
<div class="a" style="left:1738.5px;top:45.4px;width:1.0px;height:4.6px;background:#dcdcdc;opacity:0.68"></div>
<div class="a" style="left:1743.2px;top:45.4px;width:1.0px;height:4.6px;background:#dcdcdc;opacity:0.68"></div>
<div class="a" style="left:1738.5px;top:49.1px;width:5.5px;height:0.9px;background:#dcdcdc;opacity:0.68"></div>
<div class="a" style="left:1742.0px;top:40.8px;width:2.4px;height:0.9px;background:#dcdcdc;opacity:0.68"></div>
<div class="a" style="left:1745.5px;top:39.5px;font-size:11px;color:#dcdcdc;font-weight:normal;white-space:nowrap;line-height:13px;transform:scaleX(1);transform-origin:0 0">)</div>
<div class="a" style="left:1543px;top:58.8px;color:transparent;font-size:9px;white-space:nowrap;line-height:10px">主控所属地：</div>
<div class="a" style="left:1543.6px;top:59.7px;width:7.1px;height:0.9px;background:#d4d4d4;opacity:0.68"></div>
<div class="a" style="left:1544.0px;top:63.0px;width:6.3px;height:0.9px;background:#d4d4d4;opacity:0.68"></div>
<div class="a" style="left:1543.2px;top:66.7px;width:7.9px;height:1.0px;background:#d4d4d4;opacity:0.68"></div>
<div class="a" style="left:1546.7px;top:59.7px;width:1.0px;height:7.4px;background:#d4d4d4;opacity:0.68"></div>
<div class="a" style="left:1544.4px;top:61.4px;width:1.0px;height:3.7px;background:#d4d4d4;opacity:0.68"></div>
<div class="a" style="left:1552.7px;top:59.7px;width:7.1px;height:0.9px;background:#d4d4d4;opacity:0.68"></div>
<div class="a" style="left:1553.1px;top:63.0px;width:6.3px;height:0.9px;background:#d4d4d4;opacity:0.68"></div>
<div class="a" style="left:1552.4px;top:66.7px;width:7.9px;height:1.0px;background:#d4d4d4;opacity:0.68"></div>
<div class="a" style="left:1555.9px;top:59.7px;width:1.0px;height:7.4px;background:#d4d4d4;opacity:0.68"></div>
<div class="a" style="left:1553.5px;top:61.4px;width:1.0px;height:3.7px;background:#d4d4d4;opacity:0.68"></div>
<div class="a" style="left:1561.5px;top:59.1px;width:2.8px;height:0.9px;background:#d4d4d4;opacity:0.68"></div>
<div class="a" style="left:1562.4px;top:58.6px;width:1.0px;height:9.2px;background:#d4d4d4;opacity:0.68"></div>
<div class="a" style="left:1561.5px;top:63.7px;width:3.0px;height:0.9px;background:#d4d4d4;opacity:0.68"></div>
<div class="a" style="left:1565.0px;top:59.5px;width:4.3px;height:0.9px;background:#d4d4d4;opacity:0.68"></div>
<div class="a" style="left:1565.4px;top:62.7px;width:3.9px;height:0.9px;background:#d4d4d4;opacity:0.68"></div>
<div class="a" style="left:1567.0px;top:59.5px;width:1.0px;height:8.3px;background:#d4d4d4;opacity:0.68"></div>
<div class="a" style="left:1565.0px;top:66.7px;width:4.3px;height:0.9px;background:#d4d4d4;opacity:0.68"></div>
<div class="a" style="left:1571.0px;top:59.7px;width:7.1px;height:0.9px;background:#d4d4d4;opacity:0.68"></div>
<div class="a" style="left:1571.4px;top:63.0px;width:6.3px;height:0.9px;background:#d4d4d4;opacity:0.68"></div>
<div class="a" style="left:1570.7px;top:66.7px;width:7.9px;height:1.0px;background:#d4d4d4;opacity:0.68"></div>
<div class="a" style="left:1574.2px;top:59.7px;width:1.0px;height:7.4px;background:#d4d4d4;opacity:0.68"></div>
<div class="a" style="left:1571.8px;top:61.4px;width:1.0px;height:3.7px;background:#d4d4d4;opacity:0.68"></div>
<div class="a" style="left:1579.8px;top:60.4px;width:7.9px;height:0.9px;background:#d4d4d4;opacity:0.68"></div>
<div class="a" style="left:1582.9px;top:58.6px;width:1.0px;height:4.6px;background:#d4d4d4;opacity:0.68"></div>
<div class="a" style="left:1580.6px;top:63.2px;width:6.3px;height:0.9px;background:#d4d4d4;opacity:0.68"></div>
<div class="a" style="left:1581.0px;top:63.2px;width:1.0px;height:4.6px;background:#d4d4d4;opacity:0.68"></div>
<div class="a" style="left:1585.7px;top:63.2px;width:1.0px;height:4.6px;background:#d4d4d4;opacity:0.68"></div>
<div class="a" style="left:1581.0px;top:66.9px;width:5.5px;height:0.9px;background:#d4d4d4;opacity:0.68"></div>
<div class="a" style="left:1584.5px;top:58.6px;width:2.4px;height:0.9px;background:#d4d4d4;opacity:0.68"></div>
<div class="a" style="left:1591.0px;top:61.8px;width:1.4px;height:1.4px;background:#d4d4d4;box-shadow:0 3.7px 0 #d4d4d4;opacity:0.68"></div>
<div class="a" style="left:1597px;top:58.8px;color:transparent;font-size:9px;white-space:nowrap;line-height:10px">湖北省武汉</div>
<div class="a" style="left:1597.6px;top:59.7px;width:7.1px;height:0.9px;background:#dcdcdc;opacity:0.68"></div>
<div class="a" style="left:1598.0px;top:63.0px;width:6.3px;height:0.9px;background:#dcdcdc;opacity:0.68"></div>
<div class="a" style="left:1597.2px;top:66.7px;width:7.9px;height:1.0px;background:#dcdcdc;opacity:0.68"></div>
<div class="a" style="left:1600.7px;top:59.7px;width:1.0px;height:7.4px;background:#dcdcdc;opacity:0.68"></div>
<div class="a" style="left:1598.4px;top:61.4px;width:1.0px;height:3.7px;background:#dcdcdc;opacity:0.68"></div>
<div class="a" style="left:1606.4px;top:59.1px;width:2.8px;height:0.9px;background:#dcdcdc;opacity:0.68"></div>
<div class="a" style="left:1607.3px;top:58.6px;width:1.0px;height:9.2px;background:#dcdcdc;opacity:0.68"></div>
<div class="a" style="left:1606.4px;top:63.7px;width:3.0px;height:0.9px;background:#dcdcdc;opacity:0.68"></div>
<div class="a" style="left:1609.9px;top:59.5px;width:4.3px;height:0.9px;background:#dcdcdc;opacity:0.68"></div>
<div class="a" style="left:1610.3px;top:62.7px;width:3.9px;height:0.9px;background:#dcdcdc;opacity:0.68"></div>
<div class="a" style="left:1611.9px;top:59.5px;width:1.0px;height:8.3px;background:#dcdcdc;opacity:0.68"></div>
<div class="a" style="left:1609.9px;top:66.7px;width:4.3px;height:0.9px;background:#dcdcdc;opacity:0.68"></div>
<div class="a" style="left:1615.9px;top:59.7px;width:7.1px;height:0.9px;background:#dcdcdc;opacity:0.68"></div>
<div class="a" style="left:1616.3px;top:63.0px;width:6.3px;height:0.9px;background:#dcdcdc;opacity:0.68"></div>
<div class="a" style="left:1615.5px;top:66.7px;width:7.9px;height:1.0px;background:#dcdcdc;opacity:0.68"></div>
<div class="a" style="left:1619.0px;top:59.7px;width:1.0px;height:7.4px;background:#dcdcdc;opacity:0.68"></div>
<div class="a" style="left:1616.7px;top:61.4px;width:1.0px;height:3.7px;background:#dcdcdc;opacity:0.68"></div>
<div class="a" style="left:1624.7px;top:59.1px;width:2.8px;height:0.9px;background:#dcdcdc;opacity:0.68"></div>
<div class="a" style="left:1625.6px;top:58.6px;width:1.0px;height:9.2px;background:#dcdcdc;opacity:0.68"></div>
<div class="a" style="left:1624.7px;top:63.7px;width:3.0px;height:0.9px;background:#dcdcdc;opacity:0.68"></div>
<div class="a" style="left:1628.2px;top:59.5px;width:4.3px;height:0.9px;background:#dcdcdc;opacity:0.68"></div>
<div class="a" style="left:1628.6px;top:62.7px;width:3.9px;height:0.9px;background:#dcdcdc;opacity:0.68"></div>
<div class="a" style="left:1630.2px;top:59.5px;width:1.0px;height:8.3px;background:#dcdcdc;opacity:0.68"></div>
<div class="a" style="left:1628.2px;top:66.7px;width:4.3px;height:0.9px;background:#dcdcdc;opacity:0.68"></div>
<div class="a" style="left:1634.2px;top:58.6px;width:7.1px;height:0.9px;background:#dcdcdc;opacity:0.68"></div>
<div class="a" style="left:1634.2px;top:58.6px;width:1.0px;height:8.7px;background:#dcdcdc;opacity:0.68"></div>
<div class="a" style="left:1640.5px;top:58.6px;width:1.0px;height:8.7px;background:#dcdcdc;opacity:0.68"></div>
<div class="a" style="left:1635.4px;top:61.8px;width:4.7px;height:0.9px;background:#dcdcdc;opacity:0.68"></div>
<div class="a" style="left:1635.4px;top:64.6px;width:4.7px;height:0.9px;background:#dcdcdc;opacity:0.68"></div>
<div class="a" style="left:1634.2px;top:66.7px;width:7.1px;height:0.9px;background:#dcdcdc;opacity:0.68"></div>
<div class="a" style="left:1637.3px;top:60.0px;width:1.0px;height:6.4px;background:#dcdcdc;opacity:0.68"></div>
<div class="a" style="left:1543px;top:76.8px;color:transparent;font-size:9px;white-space:nowrap;line-height:10px">开始时间：</div>
<div class="a" style="left:1543.2px;top:78.4px;width:7.9px;height:0.9px;background:#d4d4d4;opacity:0.68"></div>
<div class="a" style="left:1546.3px;top:76.6px;width:1.0px;height:4.6px;background:#d4d4d4;opacity:0.68"></div>
<div class="a" style="left:1544.0px;top:81.2px;width:6.3px;height:0.9px;background:#d4d4d4;opacity:0.68"></div>
<div class="a" style="left:1544.4px;top:81.2px;width:1.0px;height:4.6px;background:#d4d4d4;opacity:0.68"></div>
<div class="a" style="left:1549.1px;top:81.2px;width:1.0px;height:4.6px;background:#d4d4d4;opacity:0.68"></div>
<div class="a" style="left:1544.4px;top:84.9px;width:5.5px;height:0.9px;background:#d4d4d4;opacity:0.68"></div>
<div class="a" style="left:1547.9px;top:76.6px;width:2.4px;height:0.9px;background:#d4d4d4;opacity:0.68"></div>
<div class="a" style="left:1552.4px;top:77.1px;width:2.8px;height:0.9px;background:#d4d4d4;opacity:0.68"></div>
<div class="a" style="left:1553.3px;top:76.6px;width:1.0px;height:9.2px;background:#d4d4d4;opacity:0.68"></div>
<div class="a" style="left:1552.4px;top:81.7px;width:3.0px;height:0.9px;background:#d4d4d4;opacity:0.68"></div>
<div class="a" style="left:1555.9px;top:77.5px;width:4.3px;height:0.9px;background:#d4d4d4;opacity:0.68"></div>
<div class="a" style="left:1556.3px;top:80.7px;width:3.9px;height:0.9px;background:#d4d4d4;opacity:0.68"></div>
<div class="a" style="left:1557.9px;top:77.5px;width:1.0px;height:8.3px;background:#d4d4d4;opacity:0.68"></div>
<div class="a" style="left:1555.9px;top:84.7px;width:4.3px;height:0.9px;background:#d4d4d4;opacity:0.68"></div>
<div class="a" style="left:1561.9px;top:77.7px;width:7.1px;height:0.9px;background:#d4d4d4;opacity:0.68"></div>
<div class="a" style="left:1562.3px;top:81.0px;width:6.3px;height:0.9px;background:#d4d4d4;opacity:0.68"></div>
<div class="a" style="left:1561.5px;top:84.7px;width:7.9px;height:1.0px;background:#d4d4d4;opacity:0.68"></div>
<div class="a" style="left:1565.0px;top:77.7px;width:1.0px;height:7.4px;background:#d4d4d4;opacity:0.68"></div>
<div class="a" style="left:1562.7px;top:79.4px;width:1.0px;height:3.7px;background:#d4d4d4;opacity:0.68"></div>
<div class="a" style="left:1571.0px;top:76.6px;width:7.1px;height:0.9px;background:#d4d4d4;opacity:0.68"></div>
<div class="a" style="left:1571.0px;top:76.6px;width:1.0px;height:8.7px;background:#d4d4d4;opacity:0.68"></div>
<div class="a" style="left:1577.3px;top:76.6px;width:1.0px;height:8.7px;background:#d4d4d4;opacity:0.68"></div>
<div class="a" style="left:1572.2px;top:79.8px;width:4.7px;height:0.9px;background:#d4d4d4;opacity:0.68"></div>
<div class="a" style="left:1572.2px;top:82.6px;width:4.7px;height:0.9px;background:#d4d4d4;opacity:0.68"></div>
<div class="a" style="left:1571.0px;top:84.7px;width:7.1px;height:0.9px;background:#d4d4d4;opacity:0.68"></div>
<div class="a" style="left:1574.2px;top:78.0px;width:1.0px;height:6.4px;background:#d4d4d4;opacity:0.68"></div>
<div class="a" style="left:1581.8px;top:79.8px;width:1.4px;height:1.4px;background:#d4d4d4;box-shadow:0 3.7px 0 #d4d4d4;opacity:0.68"></div>
<div class="a" style="left:1588.6px;top:75.3px;font-size:11px;color:#dcdcdc;font-weight:normal;white-space:nowrap;line-height:13px;transform:scaleX(0.92);transform-origin:0 0">2025-08-04 13:14:19</div>
<div class="a" style="left:1543px;top:95.2px;color:transparent;font-size:9px;white-space:nowrap;line-height:10px">被控设备：</div>
<div class="a" style="left:1543.2px;top:95.5px;width:2.8px;height:0.9px;background:#d4d4d4;opacity:0.68"></div>
<div class="a" style="left:1544.1px;top:95.0px;width:1.0px;height:9.2px;background:#d4d4d4;opacity:0.68"></div>
<div class="a" style="left:1543.2px;top:100.1px;width:3.0px;height:0.9px;background:#d4d4d4;opacity:0.68"></div>
<div class="a" style="left:1546.7px;top:95.9px;width:4.3px;height:0.9px;background:#d4d4d4;opacity:0.68"></div>
<div class="a" style="left:1547.1px;top:99.1px;width:3.9px;height:0.9px;background:#d4d4d4;opacity:0.68"></div>
<div class="a" style="left:1548.7px;top:95.9px;width:1.0px;height:8.3px;background:#d4d4d4;opacity:0.68"></div>
<div class="a" style="left:1546.7px;top:103.1px;width:4.3px;height:0.9px;background:#d4d4d4;opacity:0.68"></div>
<div class="a" style="left:1552.7px;top:96.1px;width:7.1px;height:0.9px;background:#d4d4d4;opacity:0.68"></div>
<div class="a" style="left:1553.1px;top:99.4px;width:6.3px;height:0.9px;background:#d4d4d4;opacity:0.68"></div>
<div class="a" style="left:1552.4px;top:103.1px;width:7.9px;height:1.0px;background:#d4d4d4;opacity:0.68"></div>
<div class="a" style="left:1555.9px;top:96.1px;width:1.0px;height:7.4px;background:#d4d4d4;opacity:0.68"></div>
<div class="a" style="left:1553.5px;top:97.8px;width:1.0px;height:3.7px;background:#d4d4d4;opacity:0.68"></div>
<div class="a" style="left:1561.5px;top:95.5px;width:2.8px;height:0.9px;background:#d4d4d4;opacity:0.68"></div>
<div class="a" style="left:1562.4px;top:95.0px;width:1.0px;height:9.2px;background:#d4d4d4;opacity:0.68"></div>
<div class="a" style="left:1561.5px;top:100.1px;width:3.0px;height:0.9px;background:#d4d4d4;opacity:0.68"></div>
<div class="a" style="left:1565.0px;top:95.9px;width:4.3px;height:0.9px;background:#d4d4d4;opacity:0.68"></div>
<div class="a" style="left:1565.4px;top:99.1px;width:3.9px;height:0.9px;background:#d4d4d4;opacity:0.68"></div>
<div class="a" style="left:1567.0px;top:95.9px;width:1.0px;height:8.3px;background:#d4d4d4;opacity:0.68"></div>
<div class="a" style="left:1565.0px;top:103.1px;width:4.3px;height:0.9px;background:#d4d4d4;opacity:0.68"></div>
<div class="a" style="left:1571.0px;top:95.0px;width:7.1px;height:0.9px;background:#d4d4d4;opacity:0.68"></div>
<div class="a" style="left:1571.0px;top:95.0px;width:1.0px;height:8.7px;background:#d4d4d4;opacity:0.68"></div>
<div class="a" style="left:1577.3px;top:95.0px;width:1.0px;height:8.7px;background:#d4d4d4;opacity:0.68"></div>
<div class="a" style="left:1572.2px;top:98.2px;width:4.7px;height:0.9px;background:#d4d4d4;opacity:0.68"></div>
<div class="a" style="left:1572.2px;top:101.0px;width:4.7px;height:0.9px;background:#d4d4d4;opacity:0.68"></div>
<div class="a" style="left:1571.0px;top:103.1px;width:7.1px;height:0.9px;background:#d4d4d4;opacity:0.68"></div>
<div class="a" style="left:1574.2px;top:96.4px;width:1.0px;height:6.4px;background:#d4d4d4;opacity:0.68"></div>
<div class="a" style="left:1581.8px;top:98.2px;width:1.4px;height:1.4px;background:#d4d4d4;box-shadow:0 3.7px 0 #d4d4d4;opacity:0.68"></div>
<div class="a" style="left:1588.6px;top:93.7px;font-size:11px;color:#dcdcdc;font-weight:normal;white-space:nowrap;line-height:13px;transform:scaleX(0.82);transform-origin:0 0">DESKTOP-K14DK9G</div>
<div class="a" style="left:1543px;top:116.2px;width:209px;height:1px;background:#444346"></div>
<div class="a" style="left:1543px;top:128px;color:transparent;font-size:9px;white-space:nowrap;line-height:10px">查看更多</div>
<div class="a" style="left:1543.6px;top:129.9px;width:7.1px;height:0.9px;background:#3a86d4;opacity:0.95"></div>
<div class="a" style="left:1544.0px;top:133.2px;width:6.3px;height:0.9px;background:#3a86d4;opacity:0.95"></div>
<div class="a" style="left:1543.2px;top:136.9px;width:7.9px;height:1.0px;background:#3a86d4;opacity:0.95"></div>
<div class="a" style="left:1546.7px;top:129.9px;width:1.0px;height:7.4px;background:#3a86d4;opacity:0.95"></div>
<div class="a" style="left:1544.4px;top:131.6px;width:1.0px;height:3.7px;background:#3a86d4;opacity:0.95"></div>
<div class="a" style="left:1552.7px;top:129.9px;width:7.1px;height:0.9px;background:#3a86d4;opacity:0.95"></div>
<div class="a" style="left:1553.1px;top:133.2px;width:6.3px;height:0.9px;background:#3a86d4;opacity:0.95"></div>
<div class="a" style="left:1552.4px;top:136.9px;width:7.9px;height:1.0px;background:#3a86d4;opacity:0.95"></div>
<div class="a" style="left:1555.9px;top:129.9px;width:1.0px;height:7.4px;background:#3a86d4;opacity:0.95"></div>
<div class="a" style="left:1553.5px;top:131.6px;width:1.0px;height:3.7px;background:#3a86d4;opacity:0.95"></div>
<div class="a" style="left:1561.9px;top:129.9px;width:7.1px;height:0.9px;background:#3a86d4;opacity:0.95"></div>
<div class="a" style="left:1562.3px;top:133.2px;width:6.3px;height:0.9px;background:#3a86d4;opacity:0.95"></div>
<div class="a" style="left:1561.5px;top:136.9px;width:7.9px;height:1.0px;background:#3a86d4;opacity:0.95"></div>
<div class="a" style="left:1565.0px;top:129.9px;width:1.0px;height:7.4px;background:#3a86d4;opacity:0.95"></div>
<div class="a" style="left:1562.7px;top:131.6px;width:1.0px;height:3.7px;background:#3a86d4;opacity:0.95"></div>
<div class="a" style="left:1570.7px;top:129.3px;width:2.8px;height:0.9px;background:#3a86d4;opacity:0.95"></div>
<div class="a" style="left:1571.6px;top:128.8px;width:1.0px;height:9.2px;background:#3a86d4;opacity:0.95"></div>
<div class="a" style="left:1570.7px;top:133.9px;width:3.0px;height:0.9px;background:#3a86d4;opacity:0.95"></div>
<div class="a" style="left:1574.2px;top:129.7px;width:4.3px;height:0.9px;background:#3a86d4;opacity:0.95"></div>
<div class="a" style="left:1574.6px;top:132.9px;width:3.9px;height:0.9px;background:#3a86d4;opacity:0.95"></div>
<div class="a" style="left:1576.2px;top:129.7px;width:1.0px;height:8.3px;background:#3a86d4;opacity:0.95"></div>
<div class="a" style="left:1574.2px;top:136.9px;width:4.3px;height:0.9px;background:#3a86d4;opacity:0.95"></div>
<div class="a" style="left:1556px;top:806px;color:transparent;font-size:9px;white-space:nowrap;line-height:10px">文件传输完成</div>
<div class="a" style="left:1556.2px;top:808.2px;width:7.9px;height:0.9px;background:#e6e6e6;opacity:0.68"></div>
<div class="a" style="left:1559.4px;top:806.3px;width:1.0px;height:4.7px;background:#e6e6e6;opacity:0.68"></div>
<div class="a" style="left:1557.0px;top:811.0px;width:6.3px;height:0.9px;background:#e6e6e6;opacity:0.68"></div>
<div class="a" style="left:1557.4px;top:811.0px;width:1.0px;height:4.7px;background:#e6e6e6;opacity:0.68"></div>
<div class="a" style="left:1562.1px;top:811.0px;width:1.0px;height:4.7px;background:#e6e6e6;opacity:0.68"></div>
<div class="a" style="left:1557.4px;top:814.8px;width:5.5px;height:0.9px;background:#e6e6e6;opacity:0.68"></div>
<div class="a" style="left:1560.9px;top:806.3px;width:2.4px;height:0.9px;background:#e6e6e6;opacity:0.68"></div>
<div class="a" style="left:1565.4px;top:808.2px;width:7.9px;height:0.9px;background:#e6e6e6;opacity:0.68"></div>
<div class="a" style="left:1568.6px;top:806.3px;width:1.0px;height:4.7px;background:#e6e6e6;opacity:0.68"></div>
<div class="a" style="left:1566.2px;top:811.0px;width:6.3px;height:0.9px;background:#e6e6e6;opacity:0.68"></div>
<div class="a" style="left:1566.6px;top:811.0px;width:1.0px;height:4.7px;background:#e6e6e6;opacity:0.68"></div>
<div class="a" style="left:1571.3px;top:811.0px;width:1.0px;height:4.7px;background:#e6e6e6;opacity:0.68"></div>
<div class="a" style="left:1566.6px;top:814.8px;width:5.5px;height:0.9px;background:#e6e6e6;opacity:0.68"></div>
<div class="a" style="left:1570.1px;top:806.3px;width:2.4px;height:0.9px;background:#e6e6e6;opacity:0.68"></div>
<div class="a" style="left:1575.0px;top:806.3px;width:7.1px;height:0.9px;background:#e6e6e6;opacity:0.68"></div>
<div class="a" style="left:1575.0px;top:806.3px;width:1.0px;height:8.9px;background:#e6e6e6;opacity:0.68"></div>
<div class="a" style="left:1581.3px;top:806.3px;width:1.0px;height:8.9px;background:#e6e6e6;opacity:0.68"></div>
<div class="a" style="left:1576.2px;top:809.6px;width:4.7px;height:0.9px;background:#e6e6e6;opacity:0.68"></div>
<div class="a" style="left:1576.2px;top:812.4px;width:4.7px;height:0.9px;background:#e6e6e6;opacity:0.68"></div>
<div class="a" style="left:1575.0px;top:814.6px;width:7.1px;height:0.9px;background:#e6e6e6;opacity:0.68"></div>
<div class="a" style="left:1578.2px;top:807.7px;width:1.0px;height:6.6px;background:#e6e6e6;opacity:0.68"></div>
<div class="a" style="left:1583.8px;top:808.2px;width:7.9px;height:0.9px;background:#e6e6e6;opacity:0.68"></div>
<div class="a" style="left:1587.0px;top:806.3px;width:1.0px;height:4.7px;background:#e6e6e6;opacity:0.68"></div>
<div class="a" style="left:1584.6px;top:811.0px;width:6.3px;height:0.9px;background:#e6e6e6;opacity:0.68"></div>
<div class="a" style="left:1585.0px;top:811.0px;width:1.0px;height:4.7px;background:#e6e6e6;opacity:0.68"></div>
<div class="a" style="left:1589.7px;top:811.0px;width:1.0px;height:4.7px;background:#e6e6e6;opacity:0.68"></div>
<div class="a" style="left:1585.0px;top:814.8px;width:5.5px;height:0.9px;background:#e6e6e6;opacity:0.68"></div>
<div class="a" style="left:1588.5px;top:806.3px;width:2.4px;height:0.9px;background:#e6e6e6;opacity:0.68"></div>
<div class="a" style="left:1593.0px;top:808.2px;width:7.9px;height:0.9px;background:#e6e6e6;opacity:0.68"></div>
<div class="a" style="left:1596.2px;top:806.3px;width:1.0px;height:4.7px;background:#e6e6e6;opacity:0.68"></div>
<div class="a" style="left:1593.8px;top:811.0px;width:6.3px;height:0.9px;background:#e6e6e6;opacity:0.68"></div>
<div class="a" style="left:1594.2px;top:811.0px;width:1.0px;height:4.7px;background:#e6e6e6;opacity:0.68"></div>
<div class="a" style="left:1598.9px;top:811.0px;width:1.0px;height:4.7px;background:#e6e6e6;opacity:0.68"></div>
<div class="a" style="left:1594.2px;top:814.8px;width:5.5px;height:0.9px;background:#e6e6e6;opacity:0.68"></div>
<div class="a" style="left:1597.7px;top:806.3px;width:2.4px;height:0.9px;background:#e6e6e6;opacity:0.68"></div>
<div class="a" style="left:1602.6px;top:806.3px;width:7.1px;height:0.9px;background:#e6e6e6;opacity:0.68"></div>
<div class="a" style="left:1602.6px;top:806.3px;width:1.0px;height:8.9px;background:#e6e6e6;opacity:0.68"></div>
<div class="a" style="left:1608.9px;top:806.3px;width:1.0px;height:8.9px;background:#e6e6e6;opacity:0.68"></div>
<div class="a" style="left:1603.8px;top:809.6px;width:4.7px;height:0.9px;background:#e6e6e6;opacity:0.68"></div>
<div class="a" style="left:1603.8px;top:812.4px;width:4.7px;height:0.9px;background:#e6e6e6;opacity:0.68"></div>
<div class="a" style="left:1602.6px;top:814.6px;width:7.1px;height:0.9px;background:#e6e6e6;opacity:0.68"></div>
<div class="a" style="left:1605.8px;top:807.7px;width:1.0px;height:6.6px;background:#e6e6e6;opacity:0.68"></div>
<div class="a" style="left:1526px;top:846px;color:transparent;font-size:9px;white-space:nowrap;line-height:10px">已接收15...30的1个文件</div>
<div class="a" style="left:1526.3px;top:847.0px;width:6.5px;height:0.9px;background:#d23c5a;opacity:0.68"></div>
<div class="a" style="left:1526.3px;top:847.0px;width:1.0px;height:7.8px;background:#d23c5a;opacity:0.68"></div>
<div class="a" style="left:1532.1px;top:847.0px;width:1.0px;height:7.8px;background:#d23c5a;opacity:0.68"></div>
<div class="a" style="left:1527.4px;top:849.9px;width:4.4px;height:0.9px;background:#d23c5a;opacity:0.68"></div>
<div class="a" style="left:1527.4px;top:852.3px;width:4.4px;height:0.9px;background:#d23c5a;opacity:0.68"></div>
<div class="a" style="left:1526.3px;top:854.2px;width:6.5px;height:0.9px;background:#d23c5a;opacity:0.68"></div>
<div class="a" style="left:1529.2px;top:848.2px;width:1.0px;height:5.7px;background:#d23c5a;opacity:0.68"></div>
<div class="a" style="left:1534.4px;top:847.4px;width:2.5px;height:0.9px;background:#d23c5a;opacity:0.68"></div>
<div class="a" style="left:1535.2px;top:847.0px;width:1.0px;height:8.2px;background:#d23c5a;opacity:0.68"></div>
<div class="a" style="left:1534.4px;top:851.5px;width:2.8px;height:0.9px;background:#d23c5a;opacity:0.68"></div>
<div class="a" style="left:1537.6px;top:847.8px;width:4.0px;height:0.9px;background:#d23c5a;opacity:0.68"></div>
<div class="a" style="left:1538.0px;top:850.7px;width:3.6px;height:0.9px;background:#d23c5a;opacity:0.68"></div>
<div class="a" style="left:1539.4px;top:847.8px;width:1.0px;height:7.4px;background:#d23c5a;opacity:0.68"></div>
<div class="a" style="left:1537.6px;top:854.2px;width:4.0px;height:0.9px;background:#d23c5a;opacity:0.68"></div>
<div class="a" style="left:1542.8px;top:847.4px;width:2.5px;height:0.9px;background:#d23c5a;opacity:0.68"></div>
<div class="a" style="left:1543.7px;top:847.0px;width:1.0px;height:8.2px;background:#d23c5a;opacity:0.68"></div>
<div class="a" style="left:1542.8px;top:851.5px;width:2.8px;height:0.9px;background:#d23c5a;opacity:0.68"></div>
<div class="a" style="left:1546.1px;top:847.8px;width:4.0px;height:0.9px;background:#d23c5a;opacity:0.68"></div>
<div class="a" style="left:1546.4px;top:850.7px;width:3.6px;height:0.9px;background:#d23c5a;opacity:0.68"></div>
<div class="a" style="left:1547.9px;top:847.8px;width:1.0px;height:7.4px;background:#d23c5a;opacity:0.68"></div>
<div class="a" style="left:1546.1px;top:854.2px;width:4.0px;height:0.9px;background:#d23c5a;opacity:0.68"></div>
<div class="a" style="left:1551.3px;top:845.2px;font-size:10px;color:#d23c5a;font-weight:normal;white-space:nowrap;line-height:12px;transform:scaleX(0.75);transform-origin:0 0">15...30</div>
<div class="a" style="left:1575.8px;top:847.4px;width:2.5px;height:0.9px;background:#d23c5a;opacity:0.68"></div>
<div class="a" style="left:1576.7px;top:847.0px;width:1.0px;height:8.2px;background:#d23c5a;opacity:0.68"></div>
<div class="a" style="left:1575.8px;top:851.5px;width:2.8px;height:0.9px;background:#d23c5a;opacity:0.68"></div>
<div class="a" style="left:1579.1px;top:847.8px;width:4.0px;height:0.9px;background:#d23c5a;opacity:0.68"></div>
<div class="a" style="left:1579.4px;top:850.7px;width:3.6px;height:0.9px;background:#d23c5a;opacity:0.68"></div>
<div class="a" style="left:1580.9px;top:847.8px;width:1.0px;height:7.4px;background:#d23c5a;opacity:0.68"></div>
<div class="a" style="left:1579.1px;top:854.2px;width:4.0px;height:0.9px;background:#d23c5a;opacity:0.68"></div>
<div class="a" style="left:1585.3px;top:845.2px;font-size:10px;color:#d23c5a;font-weight:normal;white-space:nowrap;line-height:12px;transform:scaleX(0.8);transform-origin:0 0">1</div>
<div class="a" style="left:1590.0px;top:848.0px;width:6.4px;height:0.9px;background:#d23c5a;opacity:0.68"></div>
<div class="a" style="left:1590.3px;top:850.9px;width:5.7px;height:0.9px;background:#d23c5a;opacity:0.68"></div>
<div class="a" style="left:1589.6px;top:854.2px;width:7.1px;height:0.9px;background:#d23c5a;opacity:0.68"></div>
<div class="a" style="left:1592.8px;top:848.0px;width:1.0px;height:6.6px;background:#d23c5a;opacity:0.68"></div>
<div class="a" style="left:1590.7px;top:849.5px;width:1.0px;height:3.3px;background:#d23c5a;opacity:0.68"></div>
<div class="a" style="left:1598.3px;top:847.0px;width:6.4px;height:0.9px;background:#d23c5a;opacity:0.68"></div>
<div class="a" style="left:1598.3px;top:847.0px;width:1.0px;height:7.8px;background:#d23c5a;opacity:0.68"></div>
<div class="a" style="left:1604.0px;top:847.0px;width:1.0px;height:7.8px;background:#d23c5a;opacity:0.68"></div>
<div class="a" style="left:1599.3px;top:849.9px;width:4.3px;height:0.9px;background:#d23c5a;opacity:0.68"></div>
<div class="a" style="left:1599.3px;top:852.3px;width:4.3px;height:0.9px;background:#d23c5a;opacity:0.68"></div>
<div class="a" style="left:1598.3px;top:854.2px;width:6.4px;height:0.9px;background:#d23c5a;opacity:0.68"></div>
<div class="a" style="left:1601.1px;top:848.2px;width:1.0px;height:5.7px;background:#d23c5a;opacity:0.68"></div>
<div class="a" style="left:1606.2px;top:848.6px;width:7.1px;height:0.9px;background:#d23c5a;opacity:0.68"></div>
<div class="a" style="left:1609.1px;top:847.0px;width:1.0px;height:4.1px;background:#d23c5a;opacity:0.68"></div>
<div class="a" style="left:1606.9px;top:851.1px;width:5.7px;height:0.9px;background:#d23c5a;opacity:0.68"></div>
<div class="a" style="left:1607.3px;top:851.1px;width:1.0px;height:4.1px;background:#d23c5a;opacity:0.68"></div>
<div class="a" style="left:1611.6px;top:851.1px;width:1.0px;height:4.1px;background:#d23c5a;opacity:0.68"></div>
<div class="a" style="left:1607.3px;top:854.4px;width:5.0px;height:0.9px;background:#d23c5a;opacity:0.68"></div>
<div class="a" style="left:1610.5px;top:847.0px;width:2.1px;height:0.9px;background:#d23c5a;opacity:0.68"></div>
<div class="a" style="left:1526px;top:863px;color:transparent;font-size:9px;white-space:nowrap;line-height:10px">已接收15...30:export_for_gaussian_splatting.py</div>
<div class="a" style="left:1526.3px;top:864.2px;width:6.5px;height:0.9px;background:#8a8a8a;opacity:0.68"></div>
<div class="a" style="left:1526.3px;top:864.2px;width:1.0px;height:7.8px;background:#8a8a8a;opacity:0.68"></div>
<div class="a" style="left:1532.1px;top:864.2px;width:1.0px;height:7.8px;background:#8a8a8a;opacity:0.68"></div>
<div class="a" style="left:1527.4px;top:867.1px;width:4.4px;height:0.9px;background:#8a8a8a;opacity:0.68"></div>
<div class="a" style="left:1527.4px;top:869.5px;width:4.4px;height:0.9px;background:#8a8a8a;opacity:0.68"></div>
<div class="a" style="left:1526.3px;top:871.4px;width:6.5px;height:0.9px;background:#8a8a8a;opacity:0.68"></div>
<div class="a" style="left:1529.2px;top:865.4px;width:1.0px;height:5.7px;background:#8a8a8a;opacity:0.68"></div>
<div class="a" style="left:1534.4px;top:865.8px;width:7.3px;height:0.9px;background:#8a8a8a;opacity:0.68"></div>
<div class="a" style="left:1537.3px;top:864.2px;width:1.0px;height:4.1px;background:#8a8a8a;opacity:0.68"></div>
<div class="a" style="left:1535.1px;top:868.3px;width:5.8px;height:0.9px;background:#8a8a8a;opacity:0.68"></div>
<div class="a" style="left:1535.4px;top:868.3px;width:1.0px;height:4.1px;background:#8a8a8a;opacity:0.68"></div>
<div class="a" style="left:1539.8px;top:868.3px;width:1.0px;height:4.1px;background:#8a8a8a;opacity:0.68"></div>
<div class="a" style="left:1535.4px;top:871.6px;width:5.1px;height:0.9px;background:#8a8a8a;opacity:0.68"></div>
<div class="a" style="left:1538.7px;top:864.2px;width:2.2px;height:0.9px;background:#8a8a8a;opacity:0.68"></div>
<div class="a" style="left:1543.2px;top:864.2px;width:6.5px;height:0.9px;background:#8a8a8a;opacity:0.68"></div>
<div class="a" style="left:1543.2px;top:864.2px;width:1.0px;height:7.8px;background:#8a8a8a;opacity:0.68"></div>
<div class="a" style="left:1549.0px;top:864.2px;width:1.0px;height:7.8px;background:#8a8a8a;opacity:0.68"></div>
<div class="a" style="left:1544.3px;top:867.1px;width:4.4px;height:0.9px;background:#8a8a8a;opacity:0.68"></div>
<div class="a" style="left:1544.3px;top:869.5px;width:4.4px;height:0.9px;background:#8a8a8a;opacity:0.68"></div>
<div class="a" style="left:1543.2px;top:871.4px;width:6.5px;height:0.9px;background:#8a8a8a;opacity:0.68"></div>
<div class="a" style="left:1546.1px;top:865.4px;width:1.0px;height:5.7px;background:#8a8a8a;opacity:0.68"></div>
<div class="a" style="left:1551.3px;top:862.4px;font-size:10px;color:#8c8c8c;font-weight:normal;white-space:nowrap;line-height:12px;transform:scaleX(0.82);transform-origin:0 0">15...30:export_for_gaussian_splatting.py</div>
</body></html>
